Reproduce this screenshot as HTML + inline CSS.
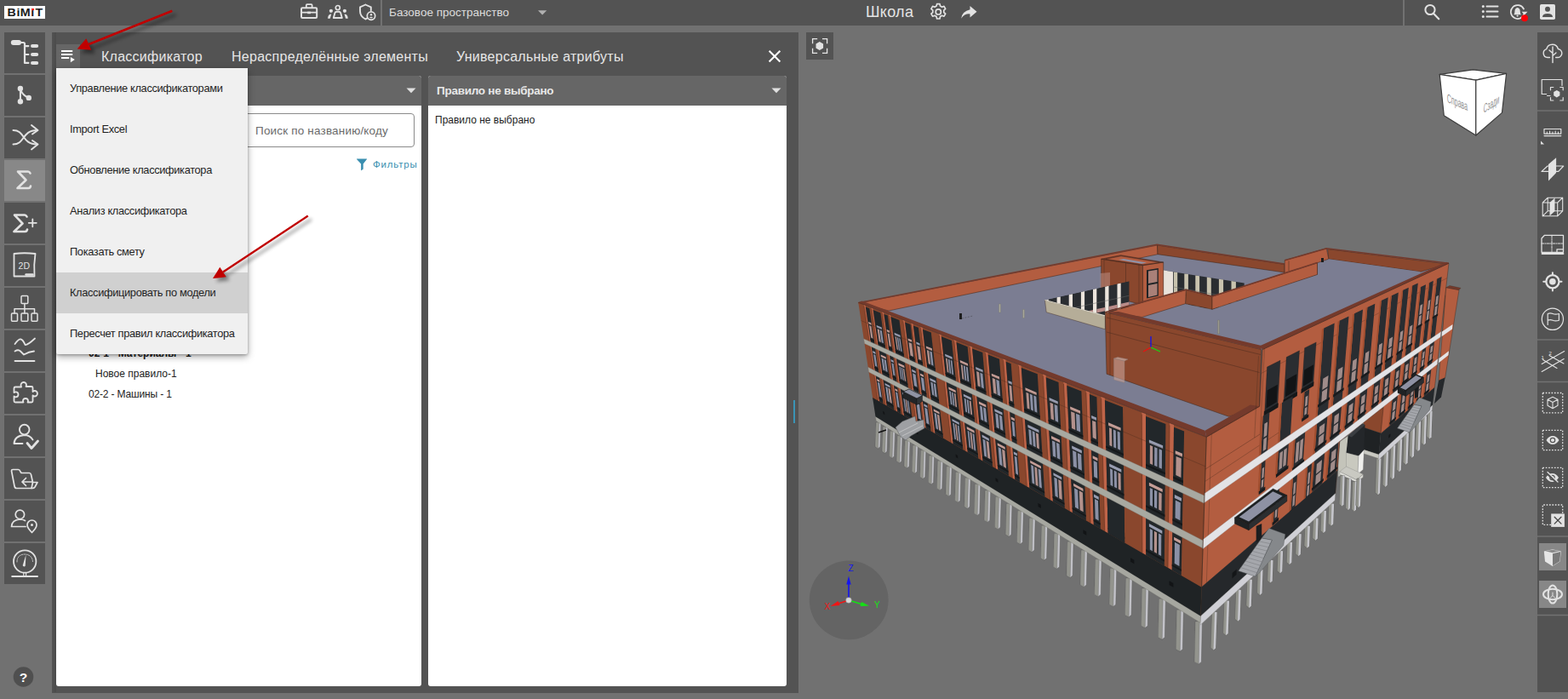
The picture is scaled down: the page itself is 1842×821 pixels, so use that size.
<!DOCTYPE html>
<html lang="ru"><head><meta charset="utf-8"><title>BIMIT</title>
<style>
*{box-sizing:border-box;margin:0;padding:0}
html,body{width:1842px;height:821px;overflow:hidden;background:#717171;font-family:"Liberation Sans",sans-serif;}
.abs{position:absolute}
#topbar{position:absolute;left:0;top:0;width:1842px;height:30px;background:#535353}
.t{position:absolute;white-space:nowrap;line-height:1}
.lb{position:absolute;left:5px;width:48px;height:48px;background:#535353}
#panel{position:absolute;left:61px;top:38px;width:877px;height:776px;background:#535353}
.sub{position:absolute;background:#fff;border-radius:3px;overflow:hidden}
.subh{position:absolute;left:0;top:0;right:0;height:35px;background:#666}
#menu{position:absolute;left:66px;top:80px;width:225px;height:336px;background:#f0f0f0;box-shadow:0 3px 8px rgba(0,0,0,.35),0 1px 3px rgba(0,0,0,.25);border-radius:0 0 2px 2px}
.mi{position:absolute;left:0;width:225px;height:48px}
.mi span{position:absolute;left:16px;top:18px;font-size:12.8px;letter-spacing:-.33px;color:#1f1f1f;white-space:nowrap;line-height:1}
#rtb{position:absolute;left:1806px;top:38px;width:36px;height:775px;background:#535353}
</style></head><body>
<!-- TOPBAR -->
<div id="topbar">
  <div class="abs" style="left:5px;top:7px;width:48px;height:15px;background:#fff"></div>
  <svg class="abs" style="left:0;top:0" width="60" height="30" viewBox="0 0 60 30"><text id="logo" transform="translate(8.600 18.800) scale(1.190 1)" dx="0 0.300 0.100 0.200 1" letter-spacing=".2" font-family="Liberation Sans,sans-serif" font-weight="bold" font-size="12" fill="#1c1c1c">BiMiT</text><rect x="37.400" y="10" width="2.500" height="2.100" fill="#f00"/></svg>
  <div class="abs" style="left:447px;top:0;width:2px;height:30px;background:#727272"></div>
  <div class="t" id="tspace" style="left:457px;top:8px;font-size:13.5px;color:#ddd;letter-spacing:.02px">Базовое пространство</div>
  <div class="t" id="tschool" style="left:1017px;top:5px;font-size:18px;color:#e4e4e4;letter-spacing:.3px">Школа</div>
  <div class="abs" style="left:1648px;top:0;width:2px;height:30px;background:#727272"></div>
  <svg class="abs" style="left:0;top:0" width="1842" height="30" viewBox="0 0 1842 30" fill="none" stroke="#e2e2e2" stroke-width="1.800" stroke-linejoin="round" stroke-linecap="round">
  <!-- briefcase -->
  <rect x="354" y="9.300" width="18.200" height="11.700" rx="1.200" stroke-width="2"/><path d="M359.800 9V6.200q0-1 1-1h4.800q1 0 1 1V9M354 14.600h18.200" stroke-width="1.800"/><rect x="361.200" y="13.600" width="3.800" height="2.600" fill="#e2e2e2" stroke="none"/>
  <!-- people -->
  <circle cx="396.800" cy="9" r="2.500" stroke-width="1.700"/><path d="M391.800 21l1.700-6q.5-1.300 2-1.300h2.600q1.500 0 2 1.300l1.700 6z" stroke-width="1.900"/>
  <g fill="#e2e2e2" stroke="none"><circle cx="388.900" cy="12.800" r="2.100"/><circle cx="404.900" cy="12.800" r="2.100"/><path d="M385 21.800q.3-5.300 4.300-5.300l-1.500 5.300zM408.800 21.800q-.3-5.300-4.300-5.300l1.500 5.300z"/></g>
  <!-- shield -->
  <path d="M429.300 5.500l-6.300 2.800v5q0 6 6.300 9.200q1.200-.5 2.200-1.200M429.300 5.500l6.500 2.800v4" stroke-width="1.900"/><circle cx="436" cy="18.600" r="4.700" stroke-width="1.700"/><circle cx="436" cy="17.200" r="1.200" fill="#e2e2e2" stroke="none"/><path d="M433.700 20.600q2.300-1.600 4.600 0q-2.300 1.600-4.600 0z" fill="#e2e2e2" stroke="none"/>
  <!-- caret -->
  <path d="M632 12.300h10.300l-5.150 5.200z" fill="#b0b0b0" stroke="none"/>
  <!-- gear -->
  <g transform="translate(1102.300 13.900)" stroke-width="1.700"><circle r="3.100"/><path d="M-1.700 -9.300h3.400l.5 2.500l2.100 1.200l2.400-.9l1.700 3l-1.900 1.700v2.400l1.900 1.700l-1.700 3l-2.400-.9l-2.100 1.200l-.5 2.500h-3.400l-.5-2.500l-2.100-1.200l-2.400.9l-1.700-3l1.900-1.700v-2.400l-1.900-1.700l1.700-3l2.400.9l2.100-1.200z"/></g>
  <!-- share -->
  <path d="M1139.500 7l8 6.700l-8 6.700v-4q-6.500-.5-10.300 5.300q1-8.500 10.300-10.500z" fill="#e2e2e2" stroke="none"/>
  <!-- search -->
  <circle cx="1680" cy="11.500" r="5.600" stroke-width="2"/><path d="M1684.200 15.900l6 6.400" stroke-width="2.200"/>
  <!-- list -->
  <g stroke-width="2"><path d="M1746.500 7.500h13M1746.500 13.500h13M1746.500 19.600h13"/></g><g fill="#e2e2e2" stroke="none"><circle cx="1742.300" cy="7.500" r="1.500"/><circle cx="1742.300" cy="13.500" r="1.500"/><circle cx="1742.300" cy="19.600" r="1.500"/></g>
  <!-- bell -->
  <path d="M1790 10.500a8 8 0 1 0 .7 5" stroke-width="1.700"/><path d="M1787.500 13.800h7l-3.500 3.600z" fill="#e2e2e2" stroke="none"/>
  <path d="M1778.200 17.200q1.200-1 1.200-3.500q0-4 3.200-4.600q3.200.6 3.200 4.600q0 2.500 1.200 3.500z" fill="#e2e2e2" stroke="none"/><circle cx="1782.600" cy="18.600" r="1.100" fill="#e2e2e2" stroke="none"/>
  <circle cx="1791" cy="21.200" r="4" fill="#fb0007" stroke="none"/>
  <!-- account -->
  <rect x="1809" y="5" width="18" height="18" rx="1.800" fill="#e2e2e2" stroke="none"/><circle cx="1818" cy="10.700" r="3" fill="#535353" stroke="none"/><path d="M1812 20q0-4 6-4t6 4z" fill="#535353" stroke="none"/>
  </svg>
</div>
<!-- LEFT TOOLBAR -->
<div id="ltb">
<svg class="abs" style="left:0;top:0" width="60" height="821" viewBox="0 0 60 821" fill="none" stroke="#e2e2e2" stroke-width="2.2" stroke-linecap="round" stroke-linejoin="round">
<g fill="#535353" stroke="none">
<rect x="5" y="38" width="48" height="48"/><rect x="5" y="88" width="48" height="48"/><rect x="5" y="138" width="48" height="48"/>
<rect x="5" y="188" width="48" height="48" fill="#888"/><rect x="5" y="238" width="48" height="48"/><rect x="5" y="288" width="48" height="48"/>
<rect x="5" y="338" width="48" height="48"/><rect x="5" y="388" width="48" height="48"/><rect x="5" y="438" width="48" height="48"/>
<rect x="5" y="488" width="48" height="48"/><rect x="5" y="538" width="48" height="48"/><rect x="5" y="588" width="48" height="48"/>
<rect x="5" y="638" width="48" height="48"/></g>
<!-- 1 tree -->
<g><rect x="12.8" y="47" width="12.2" height="6" rx="3" fill="#e2e2e2" stroke="none"/>
<path d="M24 50h3.4q1.6 0 1.6 1.6V73.9h4.4M29 54.1h4.4M29 64h4.4"/>
<rect x="36" y="52.1" width="9.2" height="4" rx="2" fill="#e2e2e2" stroke="none"/><rect x="36" y="62" width="9.2" height="4" rx="2" fill="#e2e2e2" stroke="none"/><rect x="36" y="71.9" width="9.2" height="4" rx="2" fill="#e2e2e2" stroke="none"/></g>
<!-- 2 branch -->
<g><circle cx="23.9" cy="104" r="3.2" fill="#e2e2e2" stroke="none"/><circle cx="23.9" cy="119.2" r="3.2" fill="#e2e2e2" stroke="none"/><circle cx="33.8" cy="114.9" r="3.2" fill="#e2e2e2" stroke="none"/>
<path d="M23.9 104V119.2M24.2 105q2 7 9.6 9.9" stroke-width="2"/></g>
<!-- 3 shuffle -->
<g stroke-width="2"><path d="M15.5 153c14 0 10 16.500 28 16.500M15.500 169.500c14 0 10-16.500 28-16.500"/><path d="M37 147l7.500 6-6.500 4.500M38 165l6.500 4.500-7.500 6"/></g>
<!-- 4 sigma -->
<path d="M35.500 203.500q-1-2-2.500-2H21l9.500 10L20.500 221h13q2 0 2.500-2.500" stroke-width="2.600"/>
<!-- 5 sigma plus -->
<path d="M31.500 254.500q-1-2-2.500-2H17l9.500 10L16.500 272h13q2 0 2.500-2.500" stroke-width="2.600"/><path d="M33.800 261.800h9M38.300 257.300v9" stroke-width="1.800"/>
<!-- 6 2D -->
<g stroke-width="1.800"><path d="M16.500 298q12-1.500 25 0q-2 13-1 26.500H16.500z"/><path d="M30.500 322.500h8" stroke-width="2.400"/></g>
<text x="28.300" y="315.500" font-family="Liberation Sans,sans-serif" font-size="10.500" text-anchor="middle" fill="#e2e2e2" stroke="none">2D</text>
<!-- 7 org -->
<g stroke-width="1.500"><rect x="25" y="347.500" width="7.800" height="9" rx="1"/><rect x="13.500" y="368" width="7" height="9.200" rx="1"/><rect x="25" y="368" width="7.800" height="9.200" rx="1"/><rect x="37" y="368" width="7" height="9.200" rx="1"/><path d="M28.900 356.500V368M17 368v-5.200h23.500v5.200"/></g>
<!-- 8 chart -->
<g stroke-width="1.800"><path d="M17.500 404q4.500-6 7-5.500t5 6.500q3 .5 11.500-7.500"/><path d="M17.500 412.500q4-2.500 6.500 0t4 4q6-3.500 12-4"/><path d="M17.500 424h23"/></g>
<!-- 9 puzzle -->
<path stroke-width="1.800" d="M24.500 452.500a3.200 3.200 0 1 1 6.500-.5l-.5 2h6.500q1.500 0 1.500 1.500v4.500q1-1 2.200-1a3.200 3.200 0 1 1 0 6.500q-1.200 0-2.200-1v6.500q0 1.500-1.500 1.500h-4.500l.5-1.500a3 3 0 1 0-6 0l.5 1.500H18q-1.500 0-1.500-1.500v-5.500q1 .8 2 .8a3 3 0 1 0 0-6q-1 0-2 .8V456q0-1.500 1.500-1.500h7z"/>
<!-- 10 user check -->
<g stroke-width="1.900"><circle cx="28.700" cy="504.600" r="5.800"/><path d="M16.500 521q.5-9 12-10q6.500 0 10 5.500M16.500 521h10"/><path d="M32 520.500l5 6l7.500-8.500" stroke-width="2.800"/></g>
<!-- 11 folder -->
<g stroke-width="1.700"><path d="M13.500 553q0-1.500 1.500-1.500h6.500q1.500 0 2.500 2.500l1 1.500h9.500q1.500 0 2 2l2 9h5.500l-3 5.500q-1 1.500-3 1.500H19.500q-2 0-2.500-2.500z"/><path d="M26 566h12M30.500 561.500l-4.500 4.500l4.500 4.500M38.500 566.500l-1.500 7"/></g>
<!-- 12 user pin -->
<g stroke-width="1.700"><circle cx="23.400" cy="604.300" r="5.200"/><path d="M13.500 618.500q.5-8 10-8.500q3.500 0 6 1.500M13.500 618.500H30"/><path d="M37.500 625.500q-5.500-5.500-5.500-9a5.500 5.500 0 1 1 11 0q0 3.500-5.500 9z"/><circle cx="37.500" cy="616.500" r="1.500" fill="#e2e2e2" stroke="none"/></g>
<!-- 13 gauge -->
<g stroke-width="1.800"><circle cx="29.200" cy="659.500" r="13.200"/><path d="M14.200 677h29.800" stroke-width="2"/><path d="M27.800 672.500v4h2.800v-4" stroke-width="1.200"/><path d="M30.500 651.500l-3.800 12.500a1.700 1.700 0 0 0 3 .8z" fill="#e2e2e2" stroke="none"/><path d="M20 660q0-8.500 9-9q9 .5 9.500 9" stroke-width=".8" stroke-dasharray="1.500 1.200"/></g>
<!-- help -->
<circle cx="27.500" cy="795" r="11.800" fill="#4f4f4f" stroke="none"/>
<text x="27.500" y="800.500" font-family="Liberation Sans,sans-serif" font-size="15.500" font-weight="bold" text-anchor="middle" fill="#fff" stroke="none">?</text>
</svg>
</div>
<!-- PANEL -->
<div id="panel">
  <div class="abs" style="left:0;top:0;width:5px;height:775px;background:linear-gradient(90deg,#535353,#4b4b4b)"></div>
  <div class="abs" style="left:5px;top:14px;width:28px;height:28px;background:#666"></div>
  <div class="abs" style="left:871.300px;top:432px;width:1.800px;height:27px;background:#3a94b5"></div>
  <svg class="abs" style="left:0;top:0" width="877" height="100" viewBox="61 38 877 100" fill="none">
    <path d="M72 59h13.200v2H72zM72 63h13.200v2H72zM72 67h9.200v2H72z" fill="#fff"/><path d="M82.900 67l4.900 3.100l-4.900 3.100z" fill="#fff"/>
    <path d="M903.600 59.800l12.800 12.600M916.400 59.800l-12.800 12.600" stroke="#fff" stroke-width="2.100"/>
  </svg>
  <div class="t" id="tab1" style="left:58px;top:21.2px;font-size:16px;color:#e6e6e6;letter-spacing:.26px">Классификатор</div>
  <div class="t" id="tab2" style="left:211px;top:21.2px;font-size:16px;color:#e6e6e6;letter-spacing:.26px">Нераспределённые элементы</div>
  <div class="t" id="tab3" style="left:475px;top:21.2px;font-size:16px;color:#e6e6e6;letter-spacing:.26px">Универсальные атрибуты</div>
  <div class="sub" id="sub1" style="left:5px;top:51px;width:429px;height:717px">
    <div class="subh"><svg class="abs" style="right:6px;top:14px" width="12" height="7" viewBox="0 0 12 7"><path d="M.5 .5h11l-5.500 5.700z" fill="#e0e0e0"/></svg></div>
    <div class="abs" id="search" style="left:160px;top:44px;width:261px;height:40px;border:1px solid #8a8a8a;border-radius:4px"></div>
    <div class="t" id="tsearch" style="left:234px;top:58px;font-size:13.5px;color:#6b6b6b;letter-spacing:.18px">Поиск по названию/коду</div>
    <svg class="abs" style="left:352px;top:96px" width="15" height="16" viewBox="0 0 15 16"><path d="M1.200 1.500h11.600q.6 0 .2.600l-4.300 5.400v5.600q0 .5-.4.800l-1.600 1.200q-.6.400-.6-.4V7.500L1 2.100q-.4-.6.200-.6z" fill="#3a8fb0"/></svg>
    <div class="abs" style="left:23px;top:321px;width:0;height:0;border-left:3.500px solid transparent;border-right:3.500px solid transparent;border-top:3px solid #555"></div>
    <div class="t" id="tfilter" style="left:372px;top:99px;font-size:11.5px;color:#3a8fb0;letter-spacing:.8px">Фильтры</div>
    <div class="t" id="tr1" style="left:38px;top:320px;font-size:12px;color:#222;font-weight:bold">02-1 - Материалы - 1</div>
    <div class="t" id="tr2" style="left:46px;top:344px;font-size:12px;color:#222">Новое правило-1</div>
    <div class="t" id="tr3" style="left:38px;top:368px;font-size:12px;color:#222;letter-spacing:-.16px">02-2 - Машины - 1</div>
  </div>
  <div class="sub" id="sub2" style="left:442px;top:51px;width:421px;height:717px">
    <div class="subh"><svg class="abs" style="right:6px;top:14px" width="12" height="7" viewBox="0 0 12 7"><path d="M.5 .5h11l-5.500 5.700z" fill="#e0e0e0"/></svg></div>
    <div class="t" id="th2" style="left:10px;top:10.5px;font-size:13.5px;font-weight:bold;color:#e8e8e8;letter-spacing:-.27px">Правило не выбрано</div>
    <div class="t" id="tb2" style="left:8px;top:46px;font-size:12px;color:#222">Правило не выбрано</div>
  </div>
</div>
<!-- MENU -->
<div id="menu">
  <div class="mi" style="top:0"><span id="m1">Управление классификаторами</span></div>
  <div class="mi" style="top:48px"><span id="m2">Import Excel</span></div>
  <div class="mi" style="top:96px"><span id="m3">Обновление классификатора</span></div>
  <div class="mi" style="top:144px"><span id="m4">Анализ классификатора</span></div>
  <div class="mi" style="top:192px"><span id="m5">Показать смету</span></div>
  <div class="mi" style="top:240px;background:#d0d0d0"><span id="m6">Классифицировать по модели</span></div>
  <div class="mi" style="top:288px"><span id="m7">Пересчет правил классификатора</span></div>
</div>
<!-- VIEW -->
<div id="view">
<svg class="abs" style="left:940px;top:30px" width="866" height="791" viewBox="940 30 866 791" stroke-linejoin="round">
<polygon points="1008.3,355.8 1359.2,287.2 1509,310 1558.3,291.7 1702,309.2 1481.6,410.5 1480.3,477.3 1417.3,513.4" fill="#7b7d92"/>
<polygon points="1009,356 1359.5,288 1360,298.7 1044,365" fill="#b35d40" stroke="#3a2418" stroke-width="0.5"/>
<polygon points="1359.5,288 1509,310.5 1509,320 1360,298.7" fill="#8a472d" stroke="#3a2418" stroke-width="0.5"/>
<polyline points="1008.3,355.8 1359.2,287.2 1509,310" fill="none" stroke="#743a2c" stroke-width="1.6"/>
<polygon points="1559.5,292.6 1700,310 1669,319.2 1560.8,304.2" fill="#8a472d" stroke="#3a2418" stroke-width="0.5"/>
<polygon points="1509.2,305.8 1558.3,291.7 1560.8,304.2 1547.5,308.7 1547.5,322.5 1509.2,335" fill="#b35d40" stroke="#3a2418" stroke-width="0.5"/>
<polyline points="1514,306.5 1514,318" fill="none" stroke="#3a2418" stroke-width="0.5"/>
<polyline points="1509.2,305.8 1558.3,291.7 1702,309.2" fill="none" stroke="#743a2c" stroke-width="1.6"/>
<polygon points="1366.7,317.5 1461.7,332.5 1461.7,372 1366.7,352" fill="#2a2d31"/>
<polygon points="1366.7,317.5 1371,318.2 1371,352.9 1366.7,352" fill="#c9c3ae"/>
<polygon points="1378.8,319.4 1383.2,320.1 1383.2,355.5 1378.8,354.5" fill="#c9c3ae"/>
<polygon points="1391.3,321.4 1395.9,322.1 1395.9,358.2 1391.3,357.2" fill="#c9c3ae"/>
<polygon points="1404.3,323.4 1409.1,324.2 1409.1,360.9 1404.3,359.9" fill="#c9c3ae"/>
<polygon points="1417.8,325.6 1422.8,326.4 1422.8,363.8 1417.8,362.8" fill="#c9c3ae"/>
<polygon points="1431.9,327.8 1437.1,328.6 1437.1,366.8 1431.9,365.7" fill="#c9c3ae"/>
<polygon points="1446.5,330.1 1451.9,331 1451.9,369.9 1446.5,368.8" fill="#c9c3ae"/>
<polygon points="1371,343.2 1378.8,344.7 1378.8,349.3 1371,347.7" fill="#b98b88"/>
<polygon points="1383.2,345.6 1391.3,347.2 1391.3,351.8 1383.2,350.2" fill="#b98b88"/>
<polygon points="1395.9,348.1 1404.3,349.7 1404.3,354.4 1395.9,352.7" fill="#b98b88"/>
<polygon points="1409.1,350.6 1417.8,352.3 1417.8,357.2 1409.1,355.4" fill="#b98b88"/>
<polygon points="1422.8,353.3 1431.9,355.1 1431.9,360 1422.8,358.2" fill="#b98b88"/>
<polygon points="1437.1,356.1 1446.5,358 1446.5,363 1437.1,361.1" fill="#b98b88"/>
<polygon points="1451.9,359 1461.7,360.9 1461.7,366.1 1451.9,364.1" fill="#b98b88"/>
<polyline points="1366.7,334.8 1461.7,352.2" fill="none" stroke="#6b6b68" stroke-width="0.5"/>
<polygon points="1366.7,317.5 1378,319.2 1378,354 1366.7,352" fill="#e9e2da"/>
<polygon points="1293.7,304.2 1342.5,311.7 1342.5,358 1293.7,346" fill="#8a472d" stroke="#3a2418" stroke-width="0.5"/>
<polyline points="1297,304.8 1297,347" fill="none" stroke="#3a2418" stroke-width="0.4"/>
<polyline points="1322.5,308.6 1322.5,353" fill="none" stroke="#3a2418" stroke-width="0.4"/>
<polyline points="1338,311 1338,357" fill="none" stroke="#3a2418" stroke-width="0.4"/>
<polygon points="1342.5,311.7 1366.7,308 1366.7,352 1342.5,358" fill="#b35d40" stroke="#3a2418" stroke-width="0.5"/>
<polygon points="1347,317.3 1360.8,315 1360.8,347.5 1347,350.5" fill="#1f2326"/>
<polygon points="1349,318.5 1359.5,316.8 1359.5,331 1349,333" fill="#a98078"/>
<polygon points="1349,335 1359.5,333 1359.5,346.5 1349,349" fill="#a98078"/>
<polygon points="1293.7,304.2 1316.7,299.7 1366.7,308 1342.5,311.7" fill="#743a2c" stroke="#3a2418" stroke-width="0.5"/>
<polygon points="1299,304.3 1317,300.8 1362,308.2 1343,310.8" fill="#b35d40" stroke="#3a2418" stroke-width="0.4"/>
<polygon points="1314,305 1320,304 1347,308.6 1341,309.8" fill="#8f93a8"/>
<polygon points="1292.5,321 1304,320 1304,340 1292.5,342" fill="#b98d84" fill-opacity=".55"/>
<clipPath id="cl1"><polygon points="1227.5,352.3 1326.7,330 1326.7,366 1298.3,371.2"/></clipPath><g clip-path="url(#cl1)">
<polygon points="1227.5,352.5 1326.7,330.3 1326.7,364 1227.5,386" fill="#2a2d31"/>
<polygon points="1227.5,352.5 1231.7,351.6 1231.7,385.1 1227.5,386" fill="#ece5dd"/>
<polygon points="1241.6,349.3 1245.8,348.4 1245.8,381.9 1241.6,382.9" fill="#ece5dd"/>
<polygon points="1255.7,346.2 1260,345.2 1260,378.8 1255.7,379.7" fill="#ece5dd"/>
<polygon points="1269.9,343 1274.1,342.1 1274.1,375.7 1269.9,376.6" fill="#ece5dd"/>
<polygon points="1284,339.8 1288.3,338.9 1288.3,372.5 1284,373.5" fill="#ece5dd"/>
<polygon points="1298.2,336.7 1302.5,335.7 1302.5,369.4 1298.2,370.3" fill="#ece5dd"/>
<polygon points="1312.5,333.5 1316.7,332.5 1316.7,366.2 1312.5,367.2" fill="#ece5dd"/>
<polygon points="1231.7,375.7 1241.6,373.5 1241.6,377.8 1231.7,380" fill="#b98b88"/>
<polygon points="1245.8,372.5 1255.7,370.3 1255.7,374.7 1245.8,376.9" fill="#b98b88"/>
<polygon points="1260,369.4 1269.9,367.2 1269.9,371.6 1260,373.8" fill="#b98b88"/>
<polygon points="1274.1,366.3 1284,364 1284,368.4 1274.1,370.6" fill="#b98b88"/>
<polygon points="1288.3,363.1 1298.2,360.9 1298.2,365.3 1288.3,367.5" fill="#b98b88"/>
<polygon points="1302.5,359.9 1312.5,357.7 1312.5,362.1 1302.5,364.3" fill="#b98b88"/>
<polygon points="1316.7,356.8 1326.7,354.6 1326.7,358.9 1316.7,361.2" fill="#b98b88"/>
<polyline points="1227.5,369.2 1326.7,347.2" fill="none" stroke="#6b6b68" stroke-width="0.5"/>
</g>
<polygon points="1227.5,352.5 1298.3,370.8 1298.3,386.7 1229.2,366.7" fill="#b5ad98" stroke="#3a2418" stroke-width="0.4"/>
<polyline points="1227.5,352.5 1298.3,370.8" fill="none" stroke="#d6d2c4" stroke-width="1.2"/>
<polygon points="1173.5,357 1175.5,357 1175.5,367 1173.5,367" fill="#a9a89a" stroke="#77766c" stroke-width="0.4"/>
<polygon points="1201.5,363.5 1203.5,363.5 1203.5,373.5 1201.5,373.5" fill="#a9a89a" stroke="#77766c" stroke-width="0.4"/>
<polygon points="1127,368 1130,368 1130,375 1127,375" fill="#1d1d1d"/>
<polyline points="1130,374 1143,371" fill="none" stroke="#333" stroke-width="0.4" stroke-dasharray="2 1.5"/>
<polygon points="1341.7,372.5 1392.5,356.7 1424,363.3 1547.5,322.5 1560.8,304.2 1669,319.2 1480,407.5" fill="#7b7d92"/>
<polygon points="1393.3,340.4 1424,348.3 1424,363.3 1392.5,356.7" fill="#8a472d" stroke="#3a2418" stroke-width="0.5"/>
<polygon points="1424,348.3 1547.5,308.7 1547.5,322.5 1424,363.3" fill="#b35d40" stroke="#3a2418" stroke-width="0.5"/>
<polygon points="1302,367 1393.3,340.4 1392.5,356.7 1341.7,372.5" fill="#b35d40" stroke="#3a2418" stroke-width="0.5"/>
<polyline points="1298.3,366.7 1393.3,340.2 1424,348.1 1547.5,308.5" fill="none" stroke="#743a2c" stroke-width="1.6"/>
<polygon points="1298.3,366.7 1481.6,410.5 1479.5,478 1443.6,489.3 1300,439.2" fill="#8a472d" stroke="#3a2418" stroke-width="0.5"/>
<polygon points="1298.3,366.7 1481.6,410.5 1481.8,406 1314,366" fill="#743a2c"/>
<polyline points="1304,368 1304,440.5" fill="none" stroke="#3a2418" stroke-width="0.4"/>
<polyline points="1300,390 1479.5,437.5" fill="none" stroke="#3a2418" stroke-width="0.4"/>
<polyline points="1300,373 1481,416.5" fill="none" stroke="#3a2418" stroke-width="0.4"/>
<polygon points="1308.5,421 1321,424 1321,449.5 1308.5,446" fill="#c9a49a" stroke="#8a7a76" stroke-width="0.4" fill-opacity=".6"/>
<polygon points="1308.5,421 1313,419.5 1325,422 1321,424" fill="#d8c2bb" stroke="#8a7a76" stroke-width="0.4" fill-opacity=".6"/>
<polygon points="1430.5,376 1432.5,376 1432.5,392 1430.5,392" fill="#9a998c" stroke="#6f6e64" stroke-width="0.4"/>
<polygon points="1552,303 1555,303 1555,308 1552,308" fill="#1d1d1d"/>
<polyline points="1352,408 1352,395" fill="none" stroke="#1010ee" stroke-width="1.3"/>
<polyline points="1352,408 1343,413" fill="none" stroke="#ee1010" stroke-width="1.3"/>
<polyline points="1352,408 1363,413" fill="none" stroke="#10dd10" stroke-width="1.3"/>
<polygon points="1415.6,505.8 1468.8,475.6 1480.3,477.3 1417.3,513.4" fill="#743a2c"/>
<polygon points="1008.3,355.3 1417.3,513.4 1411.5,692.8 1025.4,468.9" fill="#8a472d"/>
<polygon points="1029.1,496 1034.9,496 1033.9,524.6 1031.6,527.1 1028.1,524.6" fill="#c3c3c9" stroke="#5a5a58" stroke-width="0.5"/>
<polygon points="1029.1,496 1032.6,496 1031.6,527.1 1028.1,524.6" fill="#93948d" stroke="#5a5a58" stroke-width="0.3"/>
<polygon points="1037.2,501.1 1043,501.1 1042,530.1 1039.7,532.6 1036.2,530.1" fill="#c3c3c9" stroke="#5a5a58" stroke-width="0.5"/>
<polygon points="1037.2,501.1 1040.7,501.1 1039.7,532.6 1036.2,530.1" fill="#93948d" stroke="#5a5a58" stroke-width="0.3"/>
<polygon points="1045.6,506.3 1051.5,506.3 1050.5,535.7 1048.1,538.2 1044.6,535.7" fill="#c3c3c9" stroke="#5a5a58" stroke-width="0.5"/>
<polygon points="1045.6,506.3 1049.1,506.3 1048.1,538.2 1044.6,535.7" fill="#93948d" stroke="#5a5a58" stroke-width="0.3"/>
<polygon points="1054.2,511.7 1060.1,511.7 1059.1,541.5 1056.8,544 1053.2,541.5" fill="#c3c3c9" stroke="#5a5a58" stroke-width="0.5"/>
<polygon points="1054.2,511.7 1057.8,511.7 1056.8,544 1053.2,541.5" fill="#93948d" stroke="#5a5a58" stroke-width="0.3"/>
<polygon points="1063.1,517.2 1069.1,517.2 1068.1,547.5 1065.7,550 1062.1,547.5" fill="#c3c3c9" stroke="#5a5a58" stroke-width="0.5"/>
<polygon points="1063.1,517.2 1066.7,517.2 1065.7,550 1062.1,547.5" fill="#93948d" stroke="#5a5a58" stroke-width="0.3"/>
<polygon points="1072.3,522.9 1078.3,522.9 1077.3,553.7 1074.9,556.2 1071.3,553.7" fill="#c3c3c9" stroke="#5a5a58" stroke-width="0.5"/>
<polygon points="1072.3,522.9 1075.9,522.9 1074.9,556.2 1071.3,553.7" fill="#93948d" stroke="#5a5a58" stroke-width="0.3"/>
<polygon points="1081.7,528.8 1087.8,528.8 1086.8,560.1 1084.4,562.6 1080.7,560.1" fill="#c3c3c9" stroke="#5a5a58" stroke-width="0.5"/>
<polygon points="1081.7,528.8 1085.4,528.8 1084.4,562.6 1080.7,560.1" fill="#93948d" stroke="#5a5a58" stroke-width="0.3"/>
<polygon points="1091.5,534.9 1097.6,534.9 1096.6,566.6 1094.2,569.1 1090.5,566.6" fill="#c3c3c9" stroke="#5a5a58" stroke-width="0.5"/>
<polygon points="1091.5,534.9 1095.2,534.9 1094.2,569.1 1090.5,566.6" fill="#93948d" stroke="#5a5a58" stroke-width="0.3"/>
<polygon points="1101.5,541.2 1107.8,541.2 1106.8,573.4 1104.3,575.9 1100.5,573.4" fill="#c3c3c9" stroke="#5a5a58" stroke-width="0.5"/>
<polygon points="1101.5,541.2 1105.3,541.2 1104.3,575.9 1100.5,573.4" fill="#93948d" stroke="#5a5a58" stroke-width="0.3"/>
<polygon points="1111.9,547.7 1118.2,547.7 1117.2,580.4 1114.7,582.9 1110.9,580.4" fill="#c3c3c9" stroke="#5a5a58" stroke-width="0.5"/>
<polygon points="1111.9,547.7 1115.7,547.7 1114.7,582.9 1110.9,580.4" fill="#93948d" stroke="#5a5a58" stroke-width="0.3"/>
<polygon points="1122.7,554.4 1129,554.4 1128,587.7 1125.5,590.2 1121.7,587.7" fill="#c3c3c9" stroke="#5a5a58" stroke-width="0.5"/>
<polygon points="1122.7,554.4 1126.5,554.4 1125.5,590.2 1121.7,587.7" fill="#93948d" stroke="#5a5a58" stroke-width="0.3"/>
<polygon points="1133.8,561.3 1140.2,561.3 1139.2,595.1 1136.6,597.6 1132.8,595.1" fill="#c3c3c9" stroke="#5a5a58" stroke-width="0.5"/>
<polygon points="1133.8,561.3 1137.6,561.3 1136.6,597.6 1132.8,595.1" fill="#93948d" stroke="#5a5a58" stroke-width="0.3"/>
<polygon points="1145.3,568.5 1151.8,568.5 1150.8,602.9 1148.2,605.4 1144.3,602.9" fill="#c3c3c9" stroke="#5a5a58" stroke-width="0.5"/>
<polygon points="1145.3,568.5 1149.2,568.5 1148.2,605.4 1144.3,602.9" fill="#93948d" stroke="#5a5a58" stroke-width="0.3"/>
<polygon points="1157.2,575.9 1163.8,575.9 1162.8,610.9 1160.1,613.4 1156.2,610.9" fill="#c3c3c9" stroke="#5a5a58" stroke-width="0.5"/>
<polygon points="1157.2,575.9 1161.1,575.9 1160.1,613.4 1156.2,610.9" fill="#93948d" stroke="#5a5a58" stroke-width="0.3"/>
<polygon points="1169.5,583.6 1176.2,583.6 1175.2,619.2 1172.5,621.7 1168.5,619.2" fill="#c3c3c9" stroke="#5a5a58" stroke-width="0.5"/>
<polygon points="1169.5,583.6 1173.5,583.6 1172.5,621.7 1168.5,619.2" fill="#93948d" stroke="#5a5a58" stroke-width="0.3"/>
<polygon points="1182.3,591.5 1189,591.5 1188,627.8 1185.3,630.3 1181.3,627.8" fill="#c3c3c9" stroke="#5a5a58" stroke-width="0.5"/>
<polygon points="1182.3,591.5 1186.3,591.5 1185.3,630.3 1181.3,627.8" fill="#93948d" stroke="#5a5a58" stroke-width="0.3"/>
<polygon points="1195.5,599.8 1202.4,599.8 1201.4,636.7 1198.6,639.2 1194.5,636.7" fill="#c3c3c9" stroke="#5a5a58" stroke-width="0.5"/>
<polygon points="1195.5,599.8 1199.6,599.8 1198.6,639.2 1194.5,636.7" fill="#93948d" stroke="#5a5a58" stroke-width="0.3"/>
<polygon points="1209.3,608.4 1216.2,608.4 1215.2,646 1212.4,648.5 1208.3,646" fill="#c3c3c9" stroke="#5a5a58" stroke-width="0.5"/>
<polygon points="1209.3,608.4 1213.4,608.4 1212.4,648.5 1208.3,646" fill="#93948d" stroke="#5a5a58" stroke-width="0.3"/>
<polygon points="1223.6,617.3 1230.6,617.3 1229.6,655.6 1226.8,658.1 1222.6,655.6" fill="#c3c3c9" stroke="#5a5a58" stroke-width="0.5"/>
<polygon points="1223.6,617.3 1227.8,617.3 1226.8,658.1 1222.6,655.6" fill="#93948d" stroke="#5a5a58" stroke-width="0.3"/>
<polygon points="1238.4,626.6 1245.6,626.6 1244.6,665.7 1241.7,668.2 1237.4,665.7" fill="#c3c3c9" stroke="#5a5a58" stroke-width="0.5"/>
<polygon points="1238.4,626.6 1242.7,626.6 1241.7,668.2 1237.4,665.7" fill="#93948d" stroke="#5a5a58" stroke-width="0.3"/>
<polygon points="1253.9,636.2 1261.1,636.2 1260.1,676.1 1257.2,678.6 1252.9,676.1" fill="#c3c3c9" stroke="#5a5a58" stroke-width="0.5"/>
<polygon points="1253.9,636.2 1258.2,636.2 1257.2,678.6 1252.9,676.1" fill="#93948d" stroke="#5a5a58" stroke-width="0.3"/>
<polygon points="1270,646.2 1277.3,646.2 1276.3,686.9 1273.4,689.4 1269,686.9" fill="#c3c3c9" stroke="#5a5a58" stroke-width="0.5"/>
<polygon points="1270,646.2 1274.4,646.2 1273.4,689.4 1269,686.9" fill="#93948d" stroke="#5a5a58" stroke-width="0.3"/>
<polygon points="1286.7,656.7 1294.2,656.7 1293.2,698.2 1290.2,700.7 1285.7,698.2" fill="#c3c3c9" stroke="#5a5a58" stroke-width="0.5"/>
<polygon points="1286.7,656.7 1291.2,656.7 1290.2,700.7 1285.7,698.2" fill="#93948d" stroke="#5a5a58" stroke-width="0.3"/>
<polygon points="1304.2,667.6 1311.8,667.6 1310.8,710 1307.8,712.5 1303.2,710" fill="#c3c3c9" stroke="#5a5a58" stroke-width="0.5"/>
<polygon points="1304.2,667.6 1308.8,667.6 1307.8,712.5 1303.2,710" fill="#93948d" stroke="#5a5a58" stroke-width="0.3"/>
<polygon points="1322.5,679 1330.1,679 1329.1,722.3 1326.1,724.8 1321.5,722.3" fill="#c3c3c9" stroke="#5a5a58" stroke-width="0.5"/>
<polygon points="1322.5,679 1327.1,679 1326.1,724.8 1321.5,722.3" fill="#93948d" stroke="#5a5a58" stroke-width="0.3"/>
<polygon points="1341.5,690.9 1349.3,690.9 1348.3,735.1 1345.2,737.6 1340.5,735.1" fill="#c3c3c9" stroke="#5a5a58" stroke-width="0.5"/>
<polygon points="1341.5,690.9 1346.2,690.9 1345.2,737.6 1340.5,735.1" fill="#93948d" stroke="#5a5a58" stroke-width="0.3"/>
<polygon points="1361.5,703.3 1369.4,703.3 1368.4,748.6 1365.2,751.1 1360.5,748.6" fill="#c3c3c9" stroke="#5a5a58" stroke-width="0.5"/>
<polygon points="1361.5,703.3 1366.2,703.3 1365.2,751.1 1360.5,748.6" fill="#93948d" stroke="#5a5a58" stroke-width="0.3"/>
<polygon points="1382.4,716.3 1390.4,716.3 1389.4,762.6 1386.2,765.1 1381.4,762.6" fill="#c3c3c9" stroke="#5a5a58" stroke-width="0.5"/>
<polygon points="1382.4,716.3 1387.2,716.3 1386.2,765.1 1381.4,762.6" fill="#93948d" stroke="#5a5a58" stroke-width="0.3"/>
<polygon points="1404.2,729.9 1412.4,729.9 1411.4,777.4 1408.2,779.9 1403.2,777.4" fill="#c3c3c9" stroke="#5a5a58" stroke-width="0.5"/>
<polygon points="1404.2,729.9 1409.2,729.9 1408.2,779.9 1403.2,777.4" fill="#93948d" stroke="#5a5a58" stroke-width="0.3"/>
<polygon points="1028.5,489.3 1410.5,723.6 1410.2,731.5 1029.3,494.6" fill="#a6a7a0" stroke="#77776f" stroke-width="0.4"/>
<polygon points="1014.7,357.8 1016.6,358.5 1033.2,471.5 1031.4,470.5" fill="#bf6448"/>
<polygon points="1016.9,360.5 1021.4,362.3 1037.6,474.1 1033.2,471.5" fill="#22272a"/>
<polygon points="1020.1,378 1023.3,379.3 1023.7,381.9 1020.5,380.6" fill="#c59e97"/>
<polygon points="1021.1,382.1 1023.5,383.2 1025.6,397.7 1023.2,396.6" fill="#b3918c"/>
<polygon points="1022.4,397.8 1026.8,399.8 1027.1,401.5 1022.6,399.5" fill="#15181a"/>
<polygon points="1025.1,411.9 1028.3,413.4 1028.6,415.9 1025.5,414.4" fill="#989db1"/>
<polygon points="1026.1,415.9 1028.4,417.1 1030.5,430.9 1028.1,429.7" fill="#8b90a5"/>
<polygon points="1027.2,430.8 1031.7,433 1031.9,434.7 1027.4,432.4" fill="#15181a"/>
<polygon points="1030,444.9 1033.1,446.5 1033.4,449 1030.3,447.3" fill="#c59e97"/>
<polygon points="1030.9,448.8 1033.3,450.1 1035.7,467.1 1033.4,465.8" fill="#8b90a5"/>
<polygon points="1032.5,466.7 1036.9,469.2 1037.2,470.8 1032.7,468.3" fill="#15181a"/>
<polyline points="1015,359.5 1031.4,470.5" fill="none" stroke="#5e2f1f" stroke-width="0.6"/>
<polygon points="1023.5,361.2 1025.4,361.9 1041.8,476.5 1040,475.5" fill="#bf6448"/>
<polygon points="1025.7,364 1034.4,367.4 1050.4,481.4 1041.8,476.5" fill="#22272a"/>
<polygon points="1029.6,382 1035.7,384.5 1036.1,387.2 1030,384.6" fill="#989db1"/>
<polygon points="1030.6,386.2 1032.8,387.1 1034.9,401.9 1032.7,400.9" fill="#b3918c"/>
<polygon points="1033.6,387.5 1035.9,388.4 1038,403.3 1035.7,402.3" fill="#8b90a5"/>
<polygon points="1031.1,401.8 1039.8,405.7 1040,407.4 1031.4,403.5" fill="#15181a"/>
<polygon points="1034.6,416.4 1040.6,419.3 1041,421.8 1034.9,418.9" fill="#c59e97"/>
<polygon points="1035.5,420.5 1037.7,421.6 1039.7,435.6 1037.5,434.5" fill="#8b90a5"/>
<polygon points="1038.5,421.9 1040.8,423 1042.7,437.1 1040.5,436" fill="#8b90a5"/>
<polygon points="1035.9,435.2 1044.5,439.6 1044.7,441.3 1036.2,436.9" fill="#15181a"/>
<polygon points="1039.4,449.9 1045.4,453.1 1045.7,455.5 1039.7,452.3" fill="#989db1"/>
<polygon points="1040.3,453.9 1042.5,455.1 1044.9,472.3 1042.7,471.1" fill="#8b90a5"/>
<polygon points="1043.3,455.5 1045.5,456.7 1047.9,474 1045.7,472.8" fill="#b3918c"/>
<polygon points="1041.1,471.6 1049.7,476.5 1049.9,478.1 1041.4,473.2" fill="#15181a"/>
<polyline points="1023.7,362.9 1040,475.5" fill="none" stroke="#5e2f1f" stroke-width="0.6"/>
<polygon points="1036.1,366.1 1038.1,366.8 1054.3,483.7 1052.3,482.6" fill="#bf6448"/>
<polygon points="1038.4,368.9 1042.8,370.6 1058.6,486.2 1054.3,483.7" fill="#22272a"/>
<polygon points="1041.6,387 1044.7,388.3 1045.1,391 1042,389.7" fill="#c59e97"/>
<polygon points="1042.6,391.3 1044.8,392.3 1046.9,407.3 1044.7,406.3" fill="#b3918c"/>
<polygon points="1043.7,407.5 1048.1,409.5 1048.4,411.2 1044,409.2" fill="#15181a"/>
<polygon points="1046.4,422.1 1049.5,423.5 1049.9,426.1 1046.8,424.6" fill="#989db1"/>
<polygon points="1047.4,426.2 1049.6,427.3 1051.6,441.6 1049.4,440.5" fill="#8b90a5"/>
<polygon points="1048.5,441.6 1052.8,443.8 1053,445.5 1048.7,443.3" fill="#15181a"/>
<polygon points="1051.2,456.2 1054.2,457.8 1054.5,460.3 1051.5,458.6" fill="#c59e97"/>
<polygon points="1052.1,460.2 1054.3,461.4 1056.7,479 1054.5,477.7" fill="#8b90a5"/>
<polygon points="1053.6,478.7 1057.9,481.2 1058.1,482.8 1053.8,480.3" fill="#15181a"/>
<polyline points="1036.4,367.8 1052.3,482.6" fill="none" stroke="#5e2f1f" stroke-width="0.6"/>
<polygon points="1044.1,369.1 1046.1,369.9 1062.1,488.2 1060.1,487.1" fill="#bf6448"/>
<polygon points="1046.4,372 1056.5,376 1071.9,493.8 1062.1,488.2" fill="#22272a"/>
<polygon points="1050.5,390.8 1057.5,393.7 1057.9,396.4 1050.9,393.4" fill="#989db1"/>
<polygon points="1051.5,395.1 1053,395.7 1055,411 1053.6,410.3" fill="#b3918c"/>
<polygon points="1053.8,396.1 1055.3,396.7 1057.3,412 1055.9,411.4" fill="#8b90a5"/>
<polygon points="1056.2,397.1 1057.6,397.7 1059.7,413.1 1058.2,412.4" fill="#8b90a5"/>
<polygon points="1051.7,411.1 1061.6,415.6 1061.9,417.4 1051.9,412.9" fill="#15181a"/>
<polygon points="1055.3,426.3 1062.2,429.6 1062.6,432.2 1055.6,428.9" fill="#c59e97"/>
<polygon points="1056.3,430.5 1057.7,431.2 1059.6,445.7 1058.2,445" fill="#8b90a5"/>
<polygon points="1058.6,431.6 1060,432.3 1061.9,446.9 1060.5,446.1" fill="#8b90a5"/>
<polygon points="1060.9,432.8 1062.3,433.5 1064.3,448 1062.8,447.3" fill="#b3918c"/>
<polygon points="1056.4,445.6 1066.2,450.6 1066.4,452.4 1056.6,447.3" fill="#15181a"/>
<polygon points="1059.9,460.8 1066.8,464.5 1067.2,467 1060.3,463.3" fill="#989db1"/>
<polygon points="1060.9,465 1062.3,465.7 1064.7,483.5 1063.3,482.7" fill="#8b90a5"/>
<polygon points="1063.2,466.2 1064.6,467 1067,484.8 1065.5,484" fill="#b3918c"/>
<polygon points="1065.5,467.4 1066.9,468.2 1069.3,486.1 1067.8,485.3" fill="#8b90a5"/>
<polygon points="1061.4,483.2 1071.2,488.7 1071.4,490.4 1061.6,484.8" fill="#15181a"/>
<polyline points="1044.4,371 1060.1,487.1" fill="none" stroke="#5e2f1f" stroke-width="0.6"/>
<polygon points="1060.6,375.5 1062.8,376.4 1078.3,497.5 1076.2,496.3" fill="#bf6448"/>
<polygon points="1063.1,378.5 1069.5,381 1084.5,501.1 1078.3,497.5" fill="#22272a"/>
<polygon points="1066.5,397.5 1071,399.3 1071.3,402.1 1066.9,400.2" fill="#c59e97"/>
<polygon points="1067.5,401.9 1071.1,403.4 1073,419.1 1069.5,417.5" fill="#b3918c"/>
<polygon points="1068.2,418.6 1074.5,421.5 1074.8,423.3 1068.4,420.4" fill="#15181a"/>
<polygon points="1071.1,433.8 1075.6,436 1075.9,438.6 1071.5,436.5" fill="#989db1"/>
<polygon points="1072.1,438.2 1075.6,439.9 1077.5,454.8 1074,453" fill="#8b90a5"/>
<polygon points="1072.7,454 1079,457.2 1079.2,458.9 1072.9,455.7" fill="#15181a"/>
<polygon points="1075.6,469.2 1080,471.5 1080.4,474.1 1076,471.8" fill="#c59e97"/>
<polygon points="1076.6,473.4 1080.1,475.3 1082.4,493.5 1078.9,491.5" fill="#8b90a5"/>
<polygon points="1077.6,492.4 1083.9,495.9 1084.1,497.6 1077.8,494" fill="#15181a"/>
<polyline points="1060.9,377.4 1076.2,496.3" fill="none" stroke="#5e2f1f" stroke-width="0.6"/>
<polygon points="1070.4,379.3 1072.6,380.2 1087.8,503 1085.7,501.8" fill="#bf6448"/>
<polygon points="1072.9,382.4 1078.9,384.7 1093.6,506.4 1087.8,503" fill="#22272a"/>
<polygon points="1076.2,401.5 1080.4,403.3 1080.8,406.1 1076.6,404.3" fill="#989db1"/>
<polygon points="1077.2,406.1 1080.5,407.4 1082.4,423.3 1079.2,421.9" fill="#b3918c"/>
<polygon points="1077.9,423 1083.9,425.7 1084.1,427.6 1078.1,424.8" fill="#15181a"/>
<polygon points="1080.8,438.4 1084.9,440.4 1085.2,443.1 1081.1,441.1" fill="#c59e97"/>
<polygon points="1081.7,442.8 1085,444.4 1086.8,459.5 1083.6,457.8" fill="#8b90a5"/>
<polygon points="1082.4,458.9 1088.3,461.9 1088.5,463.6 1082.6,460.6" fill="#15181a"/>
<polygon points="1085.2,474.3 1089.3,476.5 1089.6,479.1 1085.5,476.9" fill="#989db1"/>
<polygon points="1086.1,478.6 1089.3,480.3 1091.6,498.7 1088.4,496.9" fill="#8b90a5"/>
<polygon points="1087.2,497.8 1093,501.1 1093.2,502.8 1087.4,499.5" fill="#15181a"/>
<polyline points="1070.6,381.2 1085.7,501.8" fill="none" stroke="#5e2f1f" stroke-width="0.6"/>
<polygon points="1081.3,383.5 1083.7,384.4 1098.5,509.2 1096.3,507.9" fill="#bf6448"/>
<polygon points="1083.9,386.7 1093.8,390.5 1108.1,514.7 1098.5,509.2" fill="#22272a"/>
<polygon points="1087.8,406.4 1094.8,409.3 1095.1,412.2 1088.2,409.2" fill="#c59e97"/>
<polygon points="1088.8,411 1091.3,412.1 1093.2,428.2 1090.7,427.1" fill="#b3918c"/>
<polygon points="1092.3,412.5 1094.8,413.5 1096.6,429.8 1094.2,428.6" fill="#8b90a5"/>
<polygon points="1088.8,428 1098.6,432.4 1098.9,434.3 1089.1,429.8" fill="#15181a"/>
<polygon points="1092.3,443.9 1099.1,447.2 1099.4,450 1092.6,446.7" fill="#989db1"/>
<polygon points="1093.3,448.4 1095.7,449.6 1097.5,464.9 1095.1,463.6" fill="#8b90a5"/>
<polygon points="1096.7,450.1 1099.1,451.2 1100.9,466.6 1098.4,465.4" fill="#8b90a5"/>
<polygon points="1093.2,464.4 1102.9,469.3 1103.1,471.1 1093.4,466.2" fill="#15181a"/>
<polygon points="1096.6,480.3 1103.4,483.9 1103.7,486.6 1096.9,483" fill="#c59e97"/>
<polygon points="1097.5,484.7 1100,486 1102.1,504.7 1099.7,503.3" fill="#8b90a5"/>
<polygon points="1100.9,486.5 1103.4,487.8 1105.5,506.6 1103.1,505.2" fill="#b3918c"/>
<polygon points="1097.9,503.9 1107.5,509.3 1107.7,511.1 1098.1,505.6" fill="#15181a"/>
<polyline points="1081.6,385.4 1096.3,507.9" fill="none" stroke="#5e2f1f" stroke-width="0.6"/>
<polygon points="1103.1,392 1105.6,392.9 1119.7,521.4 1117.3,520" fill="#bf6448"/>
<polygon points="1105.9,395.2 1118,400 1131.4,528.1 1119.7,521.4" fill="#22272a"/>
<polygon points="1110,415.7 1118.5,419.3 1118.8,422.2 1110.4,418.6" fill="#989db1"/>
<polygon points="1111,420.5 1112.8,421.2 1114.6,437.8 1112.8,437.1" fill="#b3918c"/>
<polygon points="1113.8,421.7 1115.6,422.4 1117.4,439.1 1115.6,438.3" fill="#8b90a5"/>
<polygon points="1116.7,422.9 1118.4,423.6 1120.2,440.4 1118.4,439.6" fill="#8b90a5"/>
<polygon points="1110.5,437.8 1122.5,443.3 1122.7,445.2 1110.7,439.7" fill="#15181a"/>
<polygon points="1114.2,454.4 1122.6,458.4 1122.9,461.2 1114.5,457.2" fill="#c59e97"/>
<polygon points="1115.2,459 1117,459.9 1118.7,475.6 1116.9,474.7" fill="#8b90a5"/>
<polygon points="1118,460.4 1119.7,461.2 1121.4,477 1119.7,476.1" fill="#8b90a5"/>
<polygon points="1120.8,461.7 1122.5,462.6 1124.2,478.4 1122.4,477.5" fill="#b3918c"/>
<polygon points="1114.6,475.3 1126.5,481.3 1126.7,483.2 1114.8,477.1" fill="#15181a"/>
<polygon points="1118.3,491.9 1126.6,496.3 1126.9,499 1118.6,494.6" fill="#989db1"/>
<polygon points="1119.3,496.4 1121,497.3 1123.1,516.5 1121.4,515.6" fill="#8b90a5"/>
<polygon points="1122,497.9 1123.7,498.8 1125.8,518.1 1124.1,517.1" fill="#b3918c"/>
<polygon points="1124.8,499.4 1126.5,500.3 1128.5,519.6 1126.8,518.7" fill="#8b90a5"/>
<polygon points="1119.1,516 1130.8,522.6 1131,524.4 1119.3,517.7" fill="#15181a"/>
<polyline points="1103.3,393.9 1117.3,520" fill="none" stroke="#5e2f1f" stroke-width="0.6"/>
<polygon points="1120.6,398.7 1123.3,399.7 1136.7,531.2 1134.1,529.7" fill="#bf6448"/>
<polygon points="1123.5,402.1 1136.6,407.2 1149.3,538.5 1136.7,531.2" fill="#22272a"/>
<polygon points="1127.7,423.1 1136.9,427 1137.2,430 1128,426.1" fill="#c59e97"/>
<polygon points="1128.8,428 1130.7,428.9 1132.4,445.9 1130.5,445" fill="#b3918c"/>
<polygon points="1131.8,429.3 1133.7,430.1 1135.4,447.2 1133.5,446.4" fill="#8b90a5"/>
<polygon points="1134.8,430.6 1136.8,431.5 1138.4,448.6 1136.5,447.7" fill="#8b90a5"/>
<polygon points="1128,445.7 1140.9,451.6 1141.1,453.6 1128.2,447.7" fill="#15181a"/>
<polygon points="1131.7,462.7 1140.8,467.1 1141,470 1132,465.6" fill="#989db1"/>
<polygon points="1132.7,467.5 1134.6,468.4 1136.2,484.5 1134.3,483.6" fill="#8b90a5"/>
<polygon points="1135.7,468.9 1137.6,469.9 1139.2,486 1137.3,485.1" fill="#8b90a5"/>
<polygon points="1138.7,470.4 1140.6,471.3 1142.2,487.5 1140.3,486.6" fill="#b3918c"/>
<polygon points="1131.9,484.1 1144.7,490.6 1144.8,492.5 1132.1,486" fill="#15181a"/>
<polygon points="1135.6,501.1 1144.5,505.8 1144.8,508.7 1135.9,503.9" fill="#c59e97"/>
<polygon points="1136.6,505.7 1138.4,506.7 1140.4,526.4 1138.6,525.3" fill="#8b90a5"/>
<polygon points="1139.5,507.3 1141.4,508.3 1143.4,528 1141.5,527" fill="#b3918c"/>
<polygon points="1142.5,508.9 1144.4,509.9 1146.3,529.7 1144.4,528.6" fill="#8b90a5"/>
<polygon points="1136.1,525.6 1148.7,532.8 1148.9,534.6 1136.3,527.4" fill="#15181a"/>
<polyline points="1120.8,400.8 1134.1,529.7" fill="none" stroke="#5e2f1f" stroke-width="0.6"/>
<polygon points="1139.1,405.9 1141.9,406.9 1154.5,541.5 1151.9,540" fill="#bf6448"/>
<polygon points="1142.1,409.4 1154.3,414.1 1166.1,548.2 1154.5,541.5" fill="#22272a"/>
<polygon points="1146.1,430.9 1154.5,434.4 1154.8,437.5 1146.4,433.9" fill="#989db1"/>
<polygon points="1147.1,435.9 1150.1,437.2 1151.7,454.6 1148.7,453.2" fill="#b3918c"/>
<polygon points="1151.3,437.7 1154.4,439 1155.9,456.5 1152.9,455.1" fill="#8b90a5"/>
<polygon points="1146.3,454.1 1158.3,459.5 1158.5,461.5 1146.5,456.1" fill="#15181a"/>
<polygon points="1149.9,471.4 1158.2,475.4 1158.5,478.4 1150.1,474.4" fill="#c59e97"/>
<polygon points="1150.9,476.3 1153.8,477.7 1155.4,494.2 1152.4,492.7" fill="#8b90a5"/>
<polygon points="1155,478.3 1158,479.7 1159.5,496.3 1156.5,494.8" fill="#8b90a5"/>
<polygon points="1150,493.3 1161.8,499.3 1162,501.3 1150.2,495.3" fill="#15181a"/>
<polygon points="1153.5,510.6 1161.7,515 1162,517.9 1153.8,513.5" fill="#989db1"/>
<polygon points="1154.5,515.4 1157.4,516.9 1159.3,537 1156.3,535.4" fill="#8b90a5"/>
<polygon points="1158.6,517.6 1161.5,519.2 1163.4,539.3 1160.4,537.7" fill="#b3918c"/>
<polygon points="1154,535.8 1165.6,542.4 1165.8,544.3 1154.2,537.7" fill="#15181a"/>
<polyline points="1139.3,408 1151.9,540" fill="none" stroke="#5e2f1f" stroke-width="0.6"/>
<polygon points="1157.5,413 1160.5,414.1 1172.3,551.7 1169.5,550.1" fill="#bf6448"/>
<polygon points="1160.7,416.6 1174,421.8 1185,559 1172.3,551.7" fill="#22272a"/>
<polygon points="1164.7,438.7 1174,442.5 1174.2,445.7 1165,441.8" fill="#c59e97"/>
<polygon points="1165.7,443.8 1169.1,445.2 1170.6,463.1 1167.2,461.6" fill="#b3918c"/>
<polygon points="1170.3,445.8 1173.7,447.2 1175.2,465.2 1171.8,463.7" fill="#8b90a5"/>
<polygon points="1164.6,462.4 1177.7,468.3 1177.9,470.4 1164.8,464.4" fill="#15181a"/>
<polygon points="1168.2,480.2 1177.4,484.5 1177.6,487.6 1168.5,483.2" fill="#989db1"/>
<polygon points="1169.2,485.1 1172.5,486.8 1173.9,503.6 1170.6,501.9" fill="#8b90a5"/>
<polygon points="1173.8,487.3 1177.1,489 1178.5,505.9 1175.2,504.2" fill="#8b90a5"/>
<polygon points="1168,502.5 1181,509.1 1181.1,511.1 1168.2,504.5" fill="#15181a"/>
<polygon points="1171.6,520.3 1180.6,525.1 1180.9,528 1171.9,523.2" fill="#c59e97"/>
<polygon points="1172.6,525.1 1175.9,526.9 1177.6,547.4 1174.3,545.6" fill="#8b90a5"/>
<polygon points="1177.1,527.5 1180.4,529.3 1182.1,549.9 1178.8,548.1" fill="#b3918c"/>
<polygon points="1171.8,545.9 1184.5,553.1 1184.6,555.1 1171.9,547.8" fill="#15181a"/>
<polyline points="1157.7,415.1 1169.5,550.1" fill="none" stroke="#5e2f1f" stroke-width="0.6"/>
<polygon points="1178.4,421.1 1181.5,422.3 1192.3,563.3 1189.3,561.6" fill="#bf6448"/>
<polygon points="1181.7,424.8 1187.7,427.2 1198,566.6 1192.3,563.3" fill="#22272a"/>
<polygon points="1184.4,446.9 1188.6,448.7 1188.8,451.9 1184.6,450.1" fill="#989db1"/>
<polygon points="1185.4,452.2 1188.3,453.4 1189.6,471.7 1186.8,470.4" fill="#b3918c"/>
<polygon points="1185.3,471.8 1191.2,474.5 1191.4,476.6 1185.5,473.9" fill="#15181a"/>
<polygon points="1187.6,489.4 1191.7,491.4 1192,494.5 1187.8,492.5" fill="#c59e97"/>
<polygon points="1188.6,494.5 1191.4,495.9 1192.7,513.1 1189.9,511.7" fill="#8b90a5"/>
<polygon points="1188.5,512.9 1194.3,515.9 1194.4,517.9 1188.6,514.9" fill="#15181a"/>
<polygon points="1190.7,530.4 1194.8,532.6 1195,535.6 1191,533.4" fill="#989db1"/>
<polygon points="1191.7,535.4 1194.5,536.9 1196.1,557.9 1193.3,556.3" fill="#8b90a5"/>
<polygon points="1191.8,557.3 1197.6,560.6 1197.7,562.5 1192,559.3" fill="#15181a"/>
<polyline points="1178.6,423.2 1189.3,561.6" fill="none" stroke="#5e2f1f" stroke-width="0.6"/>
<polygon points="1196.3,428 1199.6,429.2 1209.4,573.1 1206.3,571.4" fill="#bf6448"/>
<polygon points="1199.8,431.9 1218.8,439.3 1227.4,583.5 1209.4,573.1" fill="#22272a"/>
<polygon points="1204.4,455.3 1217.6,460.9 1217.8,464.2 1204.6,458.6" fill="#c59e97"/>
<polygon points="1205.4,460.7 1208.4,462 1209.6,480.7 1206.7,479.4" fill="#b3918c"/>
<polygon points="1209.8,462.6 1212.8,463.9 1214,482.7 1211,481.3" fill="#8b90a5"/>
<polygon points="1214.2,464.5 1217.3,465.8 1218.4,484.7 1215.4,483.3" fill="#8b90a5"/>
<polygon points="1203,479.8 1221.7,488.3 1221.9,490.5 1203.2,482" fill="#15181a"/>
<polygon points="1207.3,498.8 1220.3,505 1220.5,508.2 1207.5,502" fill="#989db1"/>
<polygon points="1208.3,504.1 1211.3,505.5 1212.4,523.1 1209.5,521.6" fill="#8b90a5"/>
<polygon points="1212.6,506.1 1215.6,507.6 1216.7,525.3 1213.8,523.8" fill="#8b90a5"/>
<polygon points="1216.9,508.2 1219.9,509.7 1221,527.5 1218.1,526" fill="#b3918c"/>
<polygon points="1205.9,521.8 1224.3,531.2 1224.4,533.3 1206.1,523.9" fill="#15181a"/>
<polygon points="1210.1,540.8 1222.9,547.6 1223.1,550.6 1210.3,543.8" fill="#c59e97"/>
<polygon points="1211.1,545.8 1214,547.4 1215.4,568.8 1212.5,567.2" fill="#8b90a5"/>
<polygon points="1215.3,548.1 1218.2,549.7 1219.6,571.2 1216.7,569.6" fill="#b3918c"/>
<polygon points="1219.6,550.4 1222.5,552 1223.9,573.6 1220.9,571.9" fill="#8b90a5"/>
<polygon points="1209,567.1 1227.1,577.4 1227.2,579.4 1209.1,569.1" fill="#15181a"/>
<polyline points="1196.5,430.2 1206.3,571.4" fill="none" stroke="#5e2f1f" stroke-width="0.6"/>
<polygon points="1225.1,439.1 1228.7,440.5 1236.9,589 1233.6,587.1" fill="#bf6448"/>
<polygon points="1228.8,443.2 1243.5,448.9 1250.8,597 1236.9,589" fill="#22272a"/>
<polygon points="1232.5,467.1 1242.7,471.4 1242.9,474.8 1232.7,470.5" fill="#989db1"/>
<polygon points="1233.5,472.7 1237.1,474.3 1238.1,493.6 1234.6,492" fill="#b3918c"/>
<polygon points="1238.6,474.9 1242.3,476.4 1243.2,495.9 1239.6,494.2" fill="#8b90a5"/>
<polygon points="1231.6,492.8 1246,499.3 1246.1,501.6 1231.7,495" fill="#15181a"/>
<polygon points="1235,512 1245,516.8 1245.2,520.1 1235.1,515.3" fill="#c59e97"/>
<polygon points="1236,517.4 1239.5,519.1 1240.4,537.3 1236.9,535.5" fill="#8b90a5"/>
<polygon points="1240.9,519.8 1244.5,521.6 1245.4,539.8 1241.9,538" fill="#8b90a5"/>
<polygon points="1234,536.1 1248.1,543.3 1248.2,545.5 1234.1,538.2" fill="#15181a"/>
<polygon points="1237.3,555.2 1247.2,560.5 1247.3,563.6 1237.5,558.3" fill="#989db1"/>
<polygon points="1238.3,560.5 1241.7,562.3 1242.9,584.4 1239.5,582.4" fill="#8b90a5"/>
<polygon points="1243.2,563.1 1246.7,565 1247.8,587.1 1244.3,585.2" fill="#b3918c"/>
<polygon points="1236.5,582.7 1250.4,590.7 1250.5,592.7 1236.7,584.8" fill="#15181a"/>
<polyline points="1225.3,441.4 1233.6,587.1" fill="none" stroke="#5e2f1f" stroke-width="0.6"/>
<polygon points="1249.4,448.5 1253.1,449.9 1259.9,602.2 1256.3,600.2" fill="#bf6448"/>
<polygon points="1253.3,452.7 1270.4,459.4 1275.9,611.5 1259.9,602.2" fill="#22272a"/>
<polygon points="1257.1,477.4 1269,482.4 1269.1,486 1257.3,480.9" fill="#c59e97"/>
<polygon points="1258.1,483.2 1262.5,485 1263.3,504.9 1259,503" fill="#b3918c"/>
<polygon points="1264,485.7 1268.4,487.6 1269.2,507.6 1264.8,505.6" fill="#8b90a5"/>
<polygon points="1255.5,503.6 1272.3,511.3 1272.4,513.6 1255.6,505.9" fill="#15181a"/>
<polygon points="1259.1,523.5 1270.8,529.1 1270.9,532.5 1259.3,526.9" fill="#989db1"/>
<polygon points="1260.1,529.1 1264.3,531.1 1265.1,549.8 1260.9,547.7" fill="#8b90a5"/>
<polygon points="1265.9,531.9 1270.2,534 1270.9,552.7 1266.6,550.6" fill="#8b90a5"/>
<polygon points="1257.5,548.1 1273.9,556.4 1274,558.6 1257.6,550.2" fill="#15181a"/>
<polygon points="1261,567.8 1272.4,573.9 1272.6,577.2 1261.2,571" fill="#c59e97"/>
<polygon points="1262,573.2 1266.1,575.5 1267.1,598 1263,595.7" fill="#8b90a5"/>
<polygon points="1267.7,576.3 1271.9,578.5 1272.7,601.3 1268.6,598.9" fill="#b3918c"/>
<polygon points="1259.6,595.9 1275.7,605 1275.8,607.1 1259.7,597.9" fill="#15181a"/>
<polyline points="1249.5,450.9 1256.3,600.2" fill="none" stroke="#5e2f1f" stroke-width="0.6"/>
<polygon points="1275.8,458.7 1279.8,460.3 1284.8,616.6 1281.1,614.5" fill="#bf6448"/>
<polygon points="1279.9,463.1 1288.4,466.4 1292.8,621.2 1284.8,616.6" fill="#22272a"/>
<polygon points="1282.1,487.9 1288,490.4 1288.1,494 1282.2,491.5" fill="#989db1"/>
<polygon points="1283.1,493.9 1287.3,495.6 1287.9,516 1283.7,514.1" fill="#b3918c"/>
<polygon points="1281.6,515.5 1289.9,519.3 1290,521.6 1281.7,517.8" fill="#15181a"/>
<polygon points="1283.6,535.2 1289.4,538 1289.5,541.4 1283.7,538.6" fill="#c59e97"/>
<polygon points="1284.6,540.9 1288.7,542.9 1289.3,562 1285.2,560" fill="#8b90a5"/>
<polygon points="1283.1,561.1 1291.2,565.2 1291.3,567.5 1283.1,563.3" fill="#15181a"/>
<polygon points="1285,580.6 1290.7,583.6 1290.8,586.9 1285.1,583.9" fill="#989db1"/>
<polygon points="1286,586.1 1290,588.3 1290.7,611.4 1286.7,609.2" fill="#8b90a5"/>
<polygon points="1284.6,610.1 1292.6,614.6 1292.7,616.8 1284.7,612.2" fill="#15181a"/>
<polyline points="1275.9,461.1 1281.1,614.5" fill="none" stroke="#5e2f1f" stroke-width="0.6"/>
<polygon points="1293.6,465.6 1297.9,467.2 1301.7,626.3 1297.7,624.1" fill="#bf6448"/>
<polygon points="1297.9,470.1 1319,478.3 1321.2,637.6 1301.7,626.3" fill="#22272a"/>
<polygon points="1302,496.3 1316.6,502.4 1316.6,506.1 1302.1,499.9" fill="#c59e97"/>
<polygon points="1303,502.3 1306,503.6 1306.4,524.4 1303.4,523" fill="#b3918c"/>
<polygon points="1307.8,504.4 1310.8,505.7 1311.2,526.5 1308.2,525.2" fill="#8b90a5"/>
<polygon points="1312.6,506.4 1315.7,507.8 1316.1,528.7 1313,527.3" fill="#8b90a5"/>
<polygon points="1299.2,523.5 1319.7,532.8 1319.8,535.2 1299.3,525.8" fill="#15181a"/>
<polygon points="1303.1,544.5 1317.3,551.3 1317.4,554.8 1303.1,548" fill="#989db1"/>
<polygon points="1304,550.3 1307,551.8 1307.4,571.2 1304.5,569.7" fill="#8b90a5"/>
<polygon points="1308.7,552.6 1311.7,554.1 1312.1,573.6 1309.1,572.1" fill="#8b90a5"/>
<polygon points="1313.5,554.9 1316.5,556.4 1316.8,576 1313.8,574.5" fill="#b3918c"/>
<polygon points="1300.3,569.9 1320.4,580.1 1320.4,582.4 1300.4,572.1" fill="#15181a"/>
<polygon points="1304.1,590.7 1318,598.2 1318.1,601.6 1304.2,594.1" fill="#c59e97"/>
<polygon points="1305,596.4 1307.9,598 1308.4,621.5 1305.6,619.8" fill="#8b90a5"/>
<polygon points="1309.6,598.9 1312.6,600.5 1313,624.1 1310.1,622.4" fill="#b3918c"/>
<polygon points="1314.3,601.4 1317.2,603 1317.6,626.7 1314.7,625" fill="#8b90a5"/>
<polygon points="1301.5,619.7 1321.1,630.8 1321.1,633 1301.6,621.8" fill="#15181a"/>
<polyline points="1293.7,468.1 1297.7,624.1" fill="none" stroke="#5e2f1f" stroke-width="0.6"/>
<polygon points="1341.3,484 1346,485.8 1346.2,652 1341.9,649.5" fill="#bf6448"/>
<polygon points="1346,488.9 1369.4,498 1367.8,664.5 1346.2,652" fill="#22272a"/>
<polygon points="1349.9,516.4 1366.1,523.2 1366.1,527.1 1349.9,520.2" fill="#989db1"/>
<polygon points="1350.9,522.7 1354.2,524.2 1354.2,545.9 1350.8,544.4" fill="#b3918c"/>
<polygon points="1356.2,525 1359.6,526.5 1359.5,548.3 1356.1,546.8" fill="#8b90a5"/>
<polygon points="1361.6,527.3 1365,528.8 1364.9,550.7 1361.5,549.2" fill="#8b90a5"/>
<polygon points="1346.1,544.8 1368.9,555.1 1368.9,557.6 1346.1,547.2" fill="#15181a"/>
<polygon points="1349.9,566.8 1365.7,574.4 1365.7,578.1 1349.9,570.5" fill="#c59e97"/>
<polygon points="1350.8,573 1354.1,574.5 1354,594.9 1350.8,593.2" fill="#8b90a5"/>
<polygon points="1356,575.5 1359.3,577.1 1359.2,597.5 1356,595.8" fill="#8b90a5"/>
<polygon points="1361.3,578 1364.7,579.7 1364.5,600.2 1361.2,598.5" fill="#b3918c"/>
<polygon points="1346.2,593.2 1368.4,604.6 1368.4,607 1346.2,595.6" fill="#15181a"/>
<polygon points="1349.9,615.1 1365.3,623.3 1365.3,626.9 1349.9,618.6" fill="#989db1"/>
<polygon points="1350.8,621 1354,622.7 1353.9,647.2 1350.8,645.4" fill="#8b90a5"/>
<polygon points="1355.9,623.8 1359.1,625.5 1359,650.1 1355.8,648.3" fill="#b3918c"/>
<polygon points="1361,626.5 1364.3,628.3 1364.1,653 1360.9,651.2" fill="#8b90a5"/>
<polygon points="1346.2,645.1 1367.9,657.4 1367.9,659.7 1346.2,647.4" fill="#15181a"/>
<polyline points="1341.3,486.6 1341.9,649.5" fill="none" stroke="#5e2f1f" stroke-width="0.6"/>
<polygon points="1374,496.7 1379.1,498.6 1376.7,669.6 1372,666.9" fill="#bf6448"/>
<polygon points="1379,501.8 1391.1,506.5 1387.7,675.9 1376.7,669.6" fill="#22272a"/>
<polygon points="1380.7,529.3 1389,532.8 1388.9,536.7 1380.6,533.2" fill="#c59e97"/>
<polygon points="1381.6,535.9 1387.8,538.5 1387.4,560.9 1381.3,558.1" fill="#b3918c"/>
<polygon points="1378.2,559.3 1389.9,564.6 1389.9,567.2 1378.2,561.9" fill="#15181a"/>
<polygon points="1379.9,581.1 1388,585 1387.9,588.8 1379.8,584.9" fill="#989db1"/>
<polygon points="1380.8,587.5 1386.8,590.4 1386.4,611.3 1380.5,608.3" fill="#8b90a5"/>
<polygon points="1377.5,609.2 1388.9,615 1388.9,617.5 1377.5,611.6" fill="#15181a"/>
<polygon points="1379.1,630.7 1387,634.9 1386.9,638.5 1379.1,634.3" fill="#c59e97"/>
<polygon points="1380,636.8 1385.9,639.9 1385.4,665.1 1379.7,661.8" fill="#8b90a5"/>
<polygon points="1376.8,662.5 1387.8,668.8 1387.8,671.1 1376.7,664.8" fill="#15181a"/>
<polyline points="1374,499.4 1372,666.9" fill="none" stroke="#5e2f1f" stroke-width="0.6"/>
<polygon points="1300.7,584.7 1320.6,595.2 1321.2,637.6 1301.7,626.3" fill="#22272a"/>
<polygon points="1014.7,397.9 1415.1,582.3 1414.8,591.2 1015.6,403.5" fill="#a8a9a1" stroke="#80807a" stroke-width="0.35"/>
<polygon points="1019.8,431.3 1413.4,634.9 1413.1,643.9 1020.6,437.1" fill="#a8a9a1" stroke="#80807a" stroke-width="0.35"/>
<polyline points="1011.5,376.5 1416.2,547.9" fill="none" stroke="#3a2418" stroke-width="0.3"/>
<polygon points="1008.3,355.3 1417.3,513.4 1415.6,505.8 1012.5,353.4" fill="#743a2c"/>
<polyline points="1008.3,355.3 1417.3,513.4" fill="none" stroke="#3a2418" stroke-width="0.4"/>
<polygon points="1025.1,466.9 1411.6,689.7 1410.5,723.6 1028.5,489.3" fill="#1f2325"/>
<polygon points="1037,482.8 1038.9,483.9 1039.4,487.2 1037.5,486" fill="#121416"/>
<polygon points="1076.1,505.9 1078.2,507.2 1078.7,510.6 1076.5,509.4" fill="#121416"/>
<polygon points="1122.5,533.4 1125,534.9 1125.4,538.6 1122.9,537.1" fill="#121416"/>
<polygon points="1169.4,561.2 1172.2,562.9 1172.6,566.8 1169.7,565.1" fill="#121416"/>
<polygon points="1219.4,590.9 1222.7,592.8 1222.9,596.9 1219.6,594.9" fill="#121416"/>
<polygon points="1272.4,622.3 1276.2,624.5 1276.3,628.8 1272.5,626.6" fill="#121416"/>
<polygon points="1328,655.2 1332.4,657.8 1332.4,662.3 1328.1,659.7" fill="#121416"/>
<polygon points="1373.6,682.3 1378.4,685.1 1378.4,689.8 1373.5,686.9" fill="#121416"/>
<polygon points="1061,460 1077,468 1077,475.5 1061,467.5" fill="#222528" stroke="#111" stroke-width="0.4"/>
<polygon points="1077,468 1083.5,464.5 1083.5,471.5 1077,475.5" fill="#303336" stroke="#111" stroke-width="0.4"/>
<polygon points="1061,460 1068,457 1083.5,464.5 1077,468" fill="#8f93a4" stroke="#17191b" stroke-width="0.7"/>
<polygon points="1052,502 1060,495 1075,489 1076,495 1085,493 1086,503 1070,512 1064,517 1058,513" fill="#9ea0a3" stroke="#5f6163" stroke-width="0.5"/>
<polyline points="1056,508 1078,497" fill="none" stroke="#c9cacc" stroke-width="0.8"/>
<polyline points="1060,512 1084,500" fill="none" stroke="#c9cacc" stroke-width="0.8"/>
<polyline points="1032,508 1041,505" fill="none" stroke="#111" stroke-width="1.4"/>
<polygon points="1423.6,718.7 1429.6,719 1428.1,761.3 1425.5,763.8 1422.1,760.8" fill="#93948d" stroke="#5a5a58" stroke-width="0.5"/>
<polygon points="1427,718.7 1429.6,719 1428.1,761.3 1425.5,763.5" fill="#c6c6cc"/>
<polygon points="1438,705.4 1444,705.7 1442.7,744 1440.1,746.5 1436.7,743.5" fill="#93948d" stroke="#5a5a58" stroke-width="0.5"/>
<polygon points="1441.5,705.4 1444,705.7 1442.7,744 1440.1,746.2" fill="#c6c6cc"/>
<polygon points="1451.8,692.6 1457.8,692.9 1456.6,727.5 1454,730 1450.6,727" fill="#93948d" stroke="#5a5a58" stroke-width="0.5"/>
<polygon points="1455.2,692.6 1457.8,692.9 1456.6,727.5 1454,729.7" fill="#c6c6cc"/>
<polygon points="1465,680.4 1470.9,680.7 1469.8,711.8 1467.3,714.3 1463.9,711.3" fill="#93948d" stroke="#5a5a58" stroke-width="0.5"/>
<polygon points="1468.4,680.4 1470.9,680.7 1469.8,711.8 1467.3,714" fill="#c6c6cc"/>
<polygon points="1477.5,668.8 1483.5,669.1 1482.5,696.8 1480,699.3 1476.6,696.3" fill="#93948d" stroke="#5a5a58" stroke-width="0.5"/>
<polygon points="1481,668.8 1483.5,669.1 1482.5,696.8 1480,699" fill="#c6c6cc"/>
<polygon points="1489.6,657.7 1495.5,658 1494.7,682.4 1492.1,684.9 1488.7,681.9" fill="#93948d" stroke="#5a5a58" stroke-width="0.5"/>
<polygon points="1493,657.7 1495.5,658 1494.7,682.4 1492.1,684.6" fill="#c6c6cc"/>
<polygon points="1501.1,647 1507.1,647.3 1506.2,671 1503.7,673.5 1500.2,670.5" fill="#93948d" stroke="#5a5a58" stroke-width="0.5"/>
<polygon points="1504.5,647 1507.1,647.3 1506.2,671 1503.7,673.2" fill="#c6c6cc"/>
<polygon points="1512.1,636.8 1518.1,637.1 1517.3,660.8 1514.7,663.3 1511.3,660.3" fill="#93948d" stroke="#5a5a58" stroke-width="0.5"/>
<polygon points="1515.6,636.8 1518.1,637.1 1517.3,660.8 1514.7,663" fill="#c6c6cc"/>
<polygon points="1522.7,627 1528.7,627.3 1527.8,651 1525.3,653.5 1521.9,650.5" fill="#93948d" stroke="#5a5a58" stroke-width="0.5"/>
<polygon points="1526.1,627 1528.7,627.3 1527.8,651 1525.3,653.2" fill="#c6c6cc"/>
<polygon points="1532.9,617.6 1538.9,617.9 1538,641.6 1535.5,644.1 1532,641.1" fill="#93948d" stroke="#5a5a58" stroke-width="0.5"/>
<polygon points="1536.3,617.6 1538.9,617.9 1538,641.6 1535.5,643.8" fill="#c6c6cc"/>
<polygon points="1542.6,608.5 1548.6,608.8 1547.8,632.5 1545.2,635 1541.8,632" fill="#93948d" stroke="#5a5a58" stroke-width="0.5"/>
<polygon points="1546.1,608.5 1548.6,608.8 1547.8,632.5 1545.2,634.7" fill="#c6c6cc"/>
<polygon points="1552,599.8 1558,600.1 1557.2,623.8 1554.6,626.3 1551.2,623.3" fill="#93948d" stroke="#5a5a58" stroke-width="0.5"/>
<polygon points="1555.5,599.8 1558,600.1 1557.2,623.8 1554.6,626" fill="#c6c6cc"/>
<polygon points="1561.1,591.4 1567.1,591.7 1566.2,615.4 1563.7,617.9 1560.2,614.9" fill="#93948d" stroke="#5a5a58" stroke-width="0.5"/>
<polygon points="1564.5,591.4 1567.1,591.7 1566.2,615.4 1563.7,617.6" fill="#c6c6cc"/>
<polygon points="1616.9,538.1 1622.4,538.4 1621,579.1 1618.7,581.6 1615.5,578.6" fill="#93948d" stroke="#5a5a58" stroke-width="0.5"/>
<polygon points="1620.1,538.1 1622.4,538.4 1621,579.1 1618.7,581.3" fill="#c6c6cc"/>
<polygon points="1625.5,530.2 1631,530.5 1629.7,569.7 1627.3,572.2 1624.1,569.2" fill="#93948d" stroke="#5a5a58" stroke-width="0.5"/>
<polygon points="1628.7,530.2 1631,530.5 1629.7,569.7 1627.3,571.9" fill="#c6c6cc"/>
<polygon points="1633.8,522.5 1639.3,522.8 1638,560.7 1635.6,563.2 1632.4,560.2" fill="#93948d" stroke="#5a5a58" stroke-width="0.5"/>
<polygon points="1637,522.5 1639.3,522.8 1638,560.7 1635.6,562.9" fill="#c6c6cc"/>
<polygon points="1641.7,515.2 1647.2,515.5 1645.9,552 1643.6,554.5 1640.4,551.5" fill="#93948d" stroke="#5a5a58" stroke-width="0.5"/>
<polygon points="1644.9,515.2 1647.2,515.5 1645.9,552 1643.6,554.2" fill="#c6c6cc"/>
<polygon points="1649.3,508.1 1654.9,508.4 1653.6,543.6 1651.3,546.1 1648.1,543.1" fill="#93948d" stroke="#5a5a58" stroke-width="0.5"/>
<polygon points="1652.5,508.1 1654.9,508.4 1653.6,543.6 1651.3,545.8" fill="#c6c6cc"/>
<polygon points="1656.7,501.3 1662.2,501.6 1661,535.6 1658.6,538.1 1655.5,535.1" fill="#93948d" stroke="#5a5a58" stroke-width="0.5"/>
<polygon points="1659.8,501.3 1662.2,501.6 1661,535.6 1658.6,537.8" fill="#c6c6cc"/>
<polygon points="1663.7,494.8 1669.2,495.1 1668.1,527.9 1665.7,530.4 1662.6,527.4" fill="#93948d" stroke="#5a5a58" stroke-width="0.5"/>
<polygon points="1666.9,494.8 1669.2,495.1 1668.1,527.9 1665.7,530.1" fill="#c6c6cc"/>
<polygon points="1670.5,488.5 1676,488.8 1674.9,520.4 1672.6,522.9 1669.4,519.9" fill="#93948d" stroke="#5a5a58" stroke-width="0.5"/>
<polygon points="1673.7,488.5 1676,488.8 1674.9,520.4 1672.6,522.6" fill="#c6c6cc"/>
<polygon points="1677.1,482.4 1682.6,482.7 1681.5,513.2 1679.2,515.7 1676,512.7" fill="#93948d" stroke="#5a5a58" stroke-width="0.5"/>
<polygon points="1680.2,482.4 1682.6,482.7 1681.5,513.2 1679.2,515.4" fill="#c6c6cc"/>
<polygon points="1600,470 1626.5,480 1622,508.8 1602.4,502.2" fill="#8a472d" stroke="#3a2418" stroke-width="0.3"/>
<polygon points="1602.4,502.2 1622,508.8 1620,534 1600,527.5" fill="#1f2224"/>
<polygon points="1600,527.5 1620,534 1619.8,538.5 1599.8,532" fill="#c9c9c2" stroke="#8e8e82" stroke-width="0.3"/>
<polygon points="1572,520 1583.7,512 1583,556 1572,560" fill="#c4c4ba" stroke="#777" stroke-width="0.3"/>
<polygon points="1583.7,512 1600,497.8 1603.5,499 1602.4,528.5 1596,535.5 1581.5,531.8" fill="#24272a"/>
<polygon points="1583.7,512 1600,497.8 1603.5,499 1588,513.5" fill="#3a3d41"/>
<polygon points="1581.5,531.8 1596,535.5 1595,557 1581.5,552.7" fill="#c9c9bf" stroke="#777" stroke-width="0.3"/>
<polygon points="1596,535.5 1602.4,528.5 1601.3,551.5 1595,557" fill="#efefec" stroke="#777" stroke-width="0.3"/>
<polygon points="1573.8,553.8 1593.6,563.6 1601.3,557 1601.3,560.4 1593.6,566.5 1573.8,557" fill="#dcdcd6" stroke="#777" stroke-width="0.3"/>
<polygon points="1573.8,553.8 1581.5,548 1601.3,557 1593.6,563.6" fill="#c9c9c2" stroke="#777" stroke-width="0.3"/>
<polygon points="1574.4,558.5 1579.6,558.8 1578.5,592.5 1576.2,595 1573.2,592" fill="#93948d" stroke="#5a5a58" stroke-width="0.5"/>
<polygon points="1577.4,558.5 1579.6,558.8 1578.5,592.5 1576.2,594.7" fill="#c6c6cc"/>
<polygon points="1581.9,562 1587.1,562.3 1585.9,597 1583.7,599.5 1580.6,596.5" fill="#93948d" stroke="#5a5a58" stroke-width="0.5"/>
<polygon points="1584.9,562 1587.1,562.3 1585.9,597 1583.7,599.2" fill="#c6c6cc"/>
<polygon points="1588.9,565.5 1594.1,565.8 1593,598.5 1590.7,601 1587.7,598" fill="#93948d" stroke="#5a5a58" stroke-width="0.5"/>
<polygon points="1591.9,565.5 1594.1,565.8 1593,598.5 1590.7,600.7" fill="#c6c6cc"/>
<polygon points="1593.9,562 1599.1,562.3 1598,594 1595.8,596.5 1592.7,593.5" fill="#93948d" stroke="#5a5a58" stroke-width="0.5"/>
<polygon points="1596.9,562 1599.1,562.3 1598,594 1595.8,596.2" fill="#c6c6cc"/>
<polygon points="1417.2,513.4 1479.6,477.3 1483,410.6 1702,309.2 1685.4,455 1622.1,509.2 1625.2,477.8 1573.8,518.2 1571,553 1411.6,689.6" fill="#b35d40" stroke="#3a2418" stroke-width="0.4"/>
<polygon points="1698.8,337.7 1714,340.6 1697.7,443.6 1690,447" fill="#b35d40" stroke="#3a2418" stroke-width="0.4"/>
<polygon points="1697.7,443.6 1690,447 1685,474 1693,466.6" fill="#25282b"/>
<polygon points="1698.8,337.7 1703,335.5 1716,338.3 1714,340.6" fill="#743a2c" stroke="#3a2418" stroke-width="0.3"/>
<polyline points="1697.7,347 1694,395" fill="none" stroke="#3a2418" stroke-width="0.3"/>
<polygon points="1483,410.6 1702,309.2 1699,307.8 1479.5,406.5" fill="#743a2c"/>
<polyline points="1417.2,513.4 1479.6,477.3 1483,410.6 1702,309.2" fill="none" stroke="#3a2418" stroke-width="0.4"/>
<polyline points="1416,551 1481.9,508.9" fill="none" stroke="#3a2418" stroke-width="0.35"/>
<polyline points="1415.6,565.4 1513.3,500.7" fill="none" stroke="#3a2418" stroke-width="0.3"/>
<polyline points="1423.3,509.9 1416.2,718.4" fill="none" stroke="#3a2418" stroke-width="0.3"/>
<polyline points="1478.5,418.2 1473.7,514.1" fill="none" stroke="#3a2418" stroke-width="0.3"/>
<polyline points="1485.5,409.5 1480.3,509.9" fill="none" stroke="#3a2418" stroke-width="0.3"/>
<polyline points="1481.6,438.5 1700,326.6" fill="none" stroke="#3a2418" stroke-width="0.25"/>
<polygon points="1488.5,431 1504,423.2 1500.9,475.7 1485.6,484.9" fill="#2a2d31" stroke="#1a1a1a" stroke-width="0.3"/>
<polygon points="1488.6,458.6 1500.8,451.8 1499.7,472.2 1487.5,479.4" fill="#121416"/>
<polygon points="1484.9,483.3 1501.8,473.2 1501.5,478.6 1484.6,488.8" fill="#15181a"/>
<polygon points="1511.2,419.5 1526.5,411.8 1523.3,462.3 1508.1,471.4" fill="#2a2d31" stroke="#1a1a1a" stroke-width="0.3"/>
<polygon points="1511.1,446.1 1523.4,439.3 1522.1,458.9 1509.9,466.2" fill="#121416"/>
<polygon points="1507.5,469.8 1524.1,459.9 1523.8,465.1 1507.2,475.2" fill="#15181a"/>
<polygon points="1532.6,408.7 1546.2,401.9 1542.8,450.6 1529.3,458.7" fill="#2a2d31" stroke="#1a1a1a" stroke-width="0.3"/>
<polygon points="1532.2,434.4 1543.1,428.3 1541.7,447.3 1530.9,453.7" fill="#121416"/>
<polygon points="1528.7,457.1 1543.5,448.3 1543.2,453.3 1528.4,462.3" fill="#15181a"/>
<polygon points="1555.2,385.5 1567.7,379.5 1553.4,568.1 1541.2,578.5" fill="#2a2d31"/>
<polygon points="1553,386.6 1555.2,385.5 1541.2,578.5 1539.1,580.3" fill="#a04e2f"/>
<polygon points="1554.3,444.8 1560.5,441.1 1558.4,468.7 1552.2,472.7" fill="#a08c8a"/>
<polygon points="1552.3,458.5 1560.5,453.4 1560.3,455.2 1552.2,460.4" fill="#2a2d31"/>
<polygon points="1548.1,475.5 1562.2,466.2 1562,469.3 1547.9,478.7" fill="#191b1d"/>
<polygon points="1550.1,501.3 1556.3,496.9 1554.6,519.2 1548.5,523.8" fill="#a08c8a"/>
<polygon points="1548.4,512.4 1556.5,506.5 1556.3,508.3 1548.3,514.3" fill="#2a2d31"/>
<polygon points="1544.4,526.9 1558.4,516.3 1558.2,519.4 1544.2,530.1" fill="#191b1d"/>
<polygon points="1546.9,544.9 1553,540.1 1551.2,565 1545.1,570.1" fill="#a08c8a"/>
<polygon points="1545.1,557.5 1553.1,550.9 1553,552.6 1545,559.3" fill="#2a2d31"/>
<polygon points="1541,573.5 1554.9,561.8 1554.7,564.7 1540.8,576.6" fill="#191b1d"/>
<polygon points="1573.5,376.7 1584.5,371.4 1569.7,554.1 1559,563.2" fill="#2a2d31"/>
<polygon points="1571.5,377.7 1573.5,376.7 1559,563.2 1557,565" fill="#a04e2f"/>
<polygon points="1572,434.1 1577.5,430.8 1575.3,457.5 1569.9,461.1" fill="#a08c8a"/>
<polygon points="1570.1,447.3 1577.3,442.8 1577.2,444.6 1570,449.1" fill="#2a2d31"/>
<polygon points="1566.2,463.5 1578.8,455.3 1578.5,458.3 1566,466.7" fill="#191b1d"/>
<polygon points="1567.7,488.8 1573.1,484.9 1571.4,506.5 1566,510.6" fill="#a08c8a"/>
<polygon points="1566.1,499.5 1573.2,494.2 1573,496 1565.9,501.2" fill="#2a2d31"/>
<polygon points="1562.4,513.3 1574.8,503.9 1574.6,506.9 1562.1,516.4" fill="#191b1d"/>
<polygon points="1564.4,531 1569.8,526.7 1567.8,550.8 1562.5,555.4" fill="#a08c8a"/>
<polygon points="1562.6,543.1 1569.7,537.3 1569.6,539 1562.5,544.8" fill="#2a2d31"/>
<polygon points="1558.9,558.4 1571.2,548 1571,550.8 1558.6,561.4" fill="#191b1d"/>
<polygon points="1591.1,368.3 1601,363.5 1589,503.7 1579.3,511.3" fill="#2a2d31"/>
<polygon points="1589.2,369.2 1591.1,368.3 1579.3,511.3 1577.4,512.8" fill="#a04e2f"/>
<polygon points="1589.2,423.8 1594.1,420.8 1591.9,446.6 1587,449.9" fill="#a08c8a"/>
<polygon points="1587.4,436.5 1593.9,432.4 1593.7,434.1 1587.2,438.2" fill="#2a2d31"/>
<polygon points="1583.7,452.1 1595.1,444.6 1594.8,447.5 1583.4,455.1" fill="#191b1d"/>
<polygon points="1584.8,476.6 1589.7,473.1 1587.9,494 1583,497.7" fill="#a08c8a"/>
<polygon points="1583.2,486.9 1589.6,482.2 1589.5,483.9 1583,488.6" fill="#2a2d31"/>
<polygon points="1579.7,500.2 1591,491.6 1590.8,494.5 1579.5,503.1" fill="#191b1d"/>
<polygon points="1606.4,360.9 1615.3,356.7 1603,492.8 1594.3,499.6" fill="#2a2d31"/>
<polygon points="1604.7,361.7 1606.4,360.9 1594.3,499.6 1592.6,500.9" fill="#a04e2f"/>
<polygon points="1604.1,414.8 1608.5,412.1 1606.2,437.2 1601.9,440.1" fill="#a08c8a"/>
<polygon points="1602.4,427.1 1608.1,423.5 1608,425.1 1602.2,428.8" fill="#2a2d31"/>
<polygon points="1598.9,442 1609.1,435.3 1608.8,438.2 1598.6,445" fill="#191b1d"/>
<polygon points="1599.6,466 1603.9,462.9 1602.1,483.2 1597.8,486.5" fill="#a08c8a"/>
<polygon points="1598.1,476 1603.8,471.8 1603.7,473.4 1597.9,477.6" fill="#2a2d31"/>
<polygon points="1594.8,488.7 1605,481 1604.7,483.8 1594.6,491.6" fill="#191b1d"/>
<polygon points="1622.8,353.1 1630.7,349.3 1618.3,480.9 1610.5,487" fill="#2a2d31"/>
<polygon points="1621.1,353.8 1622.8,353.1 1610.5,487 1608.8,488.2" fill="#a04e2f"/>
<polygon points="1620.1,405.1 1624,402.8 1621.8,427 1617.8,429.6" fill="#a08c8a"/>
<polygon points="1618.4,417 1623.6,413.7 1623.4,415.4 1618.2,418.6" fill="#2a2d31"/>
<polygon points="1615.1,431.4 1624.3,425.3 1624.1,428.1 1614.9,434.2" fill="#191b1d"/>
<polygon points="1615.5,454.7 1619.4,451.9 1617.6,471.5 1613.7,474.5" fill="#a08c8a"/>
<polygon points="1614,464.3 1619.2,460.5 1619,462 1613.9,465.9" fill="#2a2d31"/>
<polygon points="1611,476.5 1620.2,469.5 1619.9,472.2 1610.7,479.3" fill="#191b1d"/>
<polygon points="1634.8,347.3 1642.8,343.4 1630.3,471.5 1622.3,477.7" fill="#2a2d31"/>
<polygon points="1633.2,348 1634.8,347.3 1622.3,477.7 1620.8,478.9" fill="#a04e2f"/>
<polygon points="1632.1,397.9 1636.1,395.5 1633.8,419.1 1629.8,421.7" fill="#a08c8a"/>
<polygon points="1630.4,409.5 1635.6,406.2 1635.5,407.7 1630.2,411.1" fill="#2a2d31"/>
<polygon points="1627.1,423.5 1636.4,417.4 1636.1,420.1 1626.8,426.3" fill="#191b1d"/>
<polygon points="1627.5,446.1 1631.4,443.3 1629.6,462.4 1625.6,465.4" fill="#a08c8a"/>
<polygon points="1626,455.5 1631.2,451.7 1631.1,453.2 1625.8,457" fill="#2a2d31"/>
<polygon points="1622.9,467.5 1632.1,460.5 1631.9,463.1 1622.7,470.2" fill="#191b1d"/>
<polygon points="1648.2,340.8 1654.8,337.7 1638.9,494.8 1632.4,500.4" fill="#2a2d31"/>
<polygon points="1646.8,341.5 1648.2,340.8 1632.4,500.4 1630.9,501.6" fill="#a04e2f"/>
<polygon points="1645.1,390.1 1648.4,388.1 1646.1,411 1642.8,413.2" fill="#a08c8a"/>
<polygon points="1643.5,401.2 1647.8,398.5 1647.7,400 1643.3,402.8" fill="#2a2d31"/>
<polygon points="1640.5,414.7 1648.3,409.6 1648,412.2 1640.2,417.4" fill="#191b1d"/>
<polygon points="1640.4,436.9 1643.7,434.5 1641.8,453.1 1638.5,455.6" fill="#a08c8a"/>
<polygon points="1639,445.9 1643.4,442.7 1643.2,444.2 1638.9,447.4" fill="#2a2d31"/>
<polygon points="1636.3,457.3 1644,451.5 1643.8,454 1636,460" fill="#191b1d"/>
<polygon points="1636.8,473.2 1640.1,470.6 1638,491.5 1634.7,494.3" fill="#a08c8a"/>
<polygon points="1635.3,483.5 1639.6,479.9 1639.5,481.4 1635.1,484.9" fill="#2a2d31"/>
<polygon points="1632.4,496.2 1640.2,489.6 1639.9,492.1 1632.2,498.7" fill="#191b1d"/>
<polygon points="1659.2,335.5 1665.8,332.4 1649.9,485.4 1643.3,491" fill="#2a2d31"/>
<polygon points="1657.9,336.2 1659.2,335.5 1643.3,491 1642,492.2" fill="#a04e2f"/>
<polygon points="1656.1,383.5 1659.4,381.5 1657.1,403.8 1653.8,406" fill="#a08c8a"/>
<polygon points="1654.5,394.3 1658.8,391.6 1658.7,393.1 1654.3,395.8" fill="#2a2d31"/>
<polygon points="1651.5,407.4 1659.2,402.4 1659,404.9 1651.2,410.1" fill="#191b1d"/>
<polygon points="1651.4,429.1 1654.7,426.7 1652.8,444.8 1649.5,447.3" fill="#a08c8a"/>
<polygon points="1650,437.9 1654.3,434.7 1654.2,436.1 1649.8,439.3" fill="#2a2d31"/>
<polygon points="1647.3,449 1655,443.2 1654.7,445.7 1647,451.6" fill="#191b1d"/>
<polygon points="1647.7,464.5 1651,461.8 1648.9,482.2 1645.6,485" fill="#a08c8a"/>
<polygon points="1646.2,474.5 1650.6,470.9 1650.4,472.3 1646.1,475.9" fill="#2a2d31"/>
<polygon points="1643.4,486.9 1651.1,480.4 1650.8,482.8 1643.1,489.4" fill="#191b1d"/>
<polygon points="1669.1,337.1 1675,334.2 1659.7,477 1653.9,482" fill="#2a2d31"/>
<polygon points="1667.9,337.7 1669.1,337.1 1653.9,482 1652.6,483.1" fill="#a04e2f"/>
<polygon points="1668.4,358.7 1671.3,357.1 1668.8,380.9 1665.9,382.7" fill="#a08c8a"/>
<polygon points="1666.7,370.3 1670.6,368.1 1670.4,369.5 1666.6,371.8" fill="#2a2d31"/>
<polygon points="1663.9,384 1670.7,379.7 1670.5,382.2 1663.6,386.5" fill="#191b1d"/>
<polygon points="1661.8,420.8 1664.7,418.7 1662.9,436.4 1660,438.6" fill="#a08c8a"/>
<polygon points="1660.5,429.3 1664.3,426.5 1664.2,427.9 1660.4,430.8" fill="#2a2d31"/>
<polygon points="1658,440.1 1664.8,434.9 1664.6,437.4 1657.7,442.6" fill="#191b1d"/>
<polygon points="1658.1,456.2 1661,453.9 1658.9,473.8 1656,476.2" fill="#a08c8a"/>
<polygon points="1656.6,465.9 1660.5,462.8 1660.3,464.2 1656.5,467.3" fill="#2a2d31"/>
<polygon points="1654,477.9 1660.8,472.1 1660.6,474.5 1653.7,480.4" fill="#191b1d"/>
<polygon points="1679.2,332.1 1683.8,329.8 1668.5,469.4 1663.9,473.4" fill="#2a2d31"/>
<polygon points="1677.9,332.7 1679.2,332.1 1663.9,473.4 1662.7,474.4" fill="#a04e2f"/>
<polygon points="1678.1,353.3 1680.4,352.1 1677.9,375.3 1675.5,376.8" fill="#a08c8a"/>
<polygon points="1676.5,364.6 1679.6,362.8 1679.4,364.2 1676.4,366" fill="#2a2d31"/>
<polygon points="1673.9,377.8 1679.5,374.3 1679.3,376.8 1673.6,380.3" fill="#191b1d"/>
<polygon points="1671.5,413.9 1673.8,412.2 1671.9,429.5 1669.6,431.3" fill="#a08c8a"/>
<polygon points="1670.3,422.2 1673.3,420 1673.2,421.3 1670.1,423.6" fill="#2a2d31"/>
<polygon points="1668,432.5 1673.6,428.3 1673.4,430.7 1667.7,435" fill="#191b1d"/>
<polygon points="1667.8,448.5 1670.1,446.6 1667.9,466.1 1665.6,468.1" fill="#a08c8a"/>
<polygon points="1666.4,457.9 1669.4,455.4 1669.3,456.8 1666.3,459.3" fill="#2a2d31"/>
<polygon points="1664,469.4 1669.6,464.7 1669.4,467 1663.7,471.8" fill="#191b1d"/>
<polygon points="1688.2,327.6 1693.6,324.9 1678.3,461 1672.9,465.7" fill="#2a2d31"/>
<polygon points="1687,328.2 1688.2,327.6 1672.9,465.7 1671.7,466.7" fill="#a04e2f"/>
<polygon points="1687.3,348.2 1690,346.7 1687.5,369.4 1684.8,371" fill="#a08c8a"/>
<polygon points="1685.7,359.2 1689.3,357.1 1689.1,358.5 1685.6,360.6" fill="#2a2d31"/>
<polygon points="1682.9,372.2 1689.3,368.3 1689.1,370.7 1682.7,374.6" fill="#191b1d"/>
<polygon points="1680.8,407.3 1683.5,405.4 1681.6,422.2 1678.9,424.3" fill="#a08c8a"/>
<polygon points="1679.5,415.5 1683,412.8 1682.9,414.2 1679.3,416.8" fill="#2a2d31"/>
<polygon points="1677,425.7 1683.4,420.9 1683.2,423.2 1676.8,428.1" fill="#191b1d"/>
<polygon points="1677,441.1 1679.7,438.9 1677.6,457.9 1674.9,460.2" fill="#a08c8a"/>
<polygon points="1675.6,450.4 1679.2,447.4 1679,448.8 1675.4,451.7" fill="#2a2d31"/>
<polygon points="1673,461.8 1679.4,456.4 1679.2,458.7 1672.8,464.1" fill="#191b1d"/>
<polygon points="1532.4,460.4 1538.2,456.9 1536,488.2 1530.3,492" fill="#2a2d31"/>
<polygon points="1530.4,461.6 1532.4,460.4 1530.3,492 1528.3,493.4" fill="#a04e2f"/>
<polygon points="1533.7,466.3 1536.5,464.6 1535,485.9 1532.2,487.7" fill="#a08c8a"/>
<polygon points="1532.3,478 1536.4,475.4 1536.2,477.3 1532.2,479.9" fill="#2a2d31"/>
<polygon points="1529.3,491.7 1537.4,486.4 1537.2,490.1 1529.1,495.6" fill="#191b1d"/>
<polygon points="1506,473 1518.7,465.4 1515.9,510.3 1503.3,518.9" fill="#2a2d31"/>
<polygon points="1503.8,474.4 1506,473 1503.3,518.9 1501.1,520.4" fill="#a04e2f"/>
<polygon points="1483.6,488.7 1491.4,484 1488.8,530.9 1481.1,536.2" fill="#2a2d31"/>
<polygon points="1481.2,490.2 1483.6,488.7 1481.1,536.2 1478.7,537.9" fill="#a04e2f"/>
<polygon points="1485.4,497.8 1489.1,495.5 1487.4,527.4 1483.7,529.9" fill="#a08c8a"/>
<polygon points="1483.8,514.2 1489.2,510.7 1489.1,512.8 1483.7,516.3" fill="#2a2d31"/>
<polygon points="1480,536 1490.4,528.8 1490.2,532.9 1479.7,540.1" fill="#191b1d"/>
<polygon points="1502,524.8 1514.1,516.4 1512.1,548.4 1500.1,557.4" fill="#2a2d31"/>
<polygon points="1499.8,526.3 1502,524.8 1500.1,557.4 1497.9,559.1" fill="#a04e2f"/>
<polygon points="1503.5,532 1507.1,529.4 1505.9,549.4 1502.3,552.1" fill="#a08c8a"/>
<polygon points="1508.3,528.5 1511.9,526 1510.6,545.9 1507.1,548.5" fill="#a08c8a"/>
<polygon points="1499,557.3 1513.5,546.4 1513.3,550.2 1498.8,561.2" fill="#191b1d"/>
<polygon points="1521.7,512 1533.5,503.8 1530.9,540.9 1519.2,549.9" fill="#2a2d31"/>
<polygon points="1519.6,513.4 1521.7,512 1519.2,549.9 1517.2,551.5" fill="#a04e2f"/>
<polygon points="1523,520.6 1526.5,518 1525,541.3 1521.4,543.9" fill="#a08c8a"/>
<polygon points="1527.7,517.2 1531.2,514.7 1529.6,537.7 1526.1,540.4" fill="#a08c8a"/>
<polygon points="1518.3,549.7 1532.3,539 1532,542.7 1518,553.5" fill="#191b1d"/>
<polygon points="1481.7,544 1486.6,540.5 1484.8,573.6 1479.9,577.3" fill="#2a2d31"/>
<polygon points="1479.3,545.7 1481.7,544 1479.9,577.3 1477.6,579.2" fill="#a04e2f"/>
<polygon points="1482.8,550.3 1485.2,548.6 1483.9,571.2 1481.6,572.9" fill="#a08c8a"/>
<polygon points="1481.7,562.6 1485.1,560 1485,562 1481.6,564.6" fill="#2a2d31"/>
<polygon points="1478.8,577.2 1486.4,571.5 1486.2,575.4 1478.6,581.3" fill="#191b1d"/>
<polygon points="1498,575 1503.1,571.1 1500.7,609.7 1495.7,613.9" fill="#2a2d31"/>
<polygon points="1495.8,576.7 1498,575 1495.7,613.9 1493.5,615.8" fill="#a04e2f"/>
<polygon points="1499,582.4 1501.4,580.5 1499.9,606.8 1497.5,608.8" fill="#a08c8a"/>
<polygon points="1497.7,596.1 1501.2,593.3 1501.1,595.1 1497.6,598" fill="#2a2d31"/>
<polygon points="1494.7,613.9 1502.2,607.5 1502,611.3 1494.5,617.7" fill="#191b1d"/>
<polygon points="1519,560 1524.1,556 1521.4,595.9 1516.4,600.2" fill="#2a2d31"/>
<polygon points="1517,561.6 1519,560 1516.4,600.2 1514.4,602" fill="#a04e2f"/>
<polygon points="1519.9,567.7 1522.4,565.8 1520.6,592.9 1518.2,595" fill="#a08c8a"/>
<polygon points="1518.6,581.7 1522.1,578.8 1522,580.6 1518.4,583.5" fill="#2a2d31"/>
<polygon points="1515.4,600.2 1522.8,593.9 1522.5,597.5 1515.2,603.8" fill="#191b1d"/>
<polygon points="1536,548 1541.1,544 1538.2,584.1 1533.2,588.4" fill="#2a2d31"/>
<polygon points="1534.1,549.5 1536,548 1533.2,588.4 1531.3,590.1" fill="#a04e2f"/>
<polygon points="1536.9,555.8 1539.3,553.8 1537.4,581.1 1535,583.1" fill="#a08c8a"/>
<polygon points="1535.4,569.7 1539,566.8 1538.8,568.6 1535.3,571.5" fill="#2a2d31"/>
<polygon points="1532.3,588.4 1539.5,582.2 1539.2,585.7 1532,591.9" fill="#191b1d"/>
<polygon points="1415.1,579.4 1692.9,389.4 1692.1,395.9 1414.8,590.5" fill="#e3e3e6" stroke="#8a8a8a" stroke-width="0.3"/>
<polygon points="1413.4,633.4 1689.2,421.3 1688.4,428 1413,644.7" fill="#e3e3e6" stroke="#8a8a8a" stroke-width="0.3"/>
<polygon points="1694,389.5 1706.5,381 1706,386.6 1693.6,395.2" fill="#e3e3e6"/>
<polygon points="1690.5,421 1702,412.3 1701.4,417.3 1690,426.3" fill="#e3e3e6"/>
<polygon points="1411.6,689.6 1571,553 1568.8,579.6 1410.5,723.6" fill="#25282b"/>
<polygon points="1622.1,509.2 1685.4,455 1683,475.7 1619.8,533.2" fill="#25282b"/>
<polygon points="1410.5,723.6 1568.8,579.6 1568.1,587.7 1410.2,733.9" fill="#d0d0d6" stroke="#77776f" stroke-width="0.3"/>
<polygon points="1619.8,533.2 1683,475.7 1682.3,482 1619.1,540.5" fill="#d0d0d6" stroke="#77776f" stroke-width="0.3"/>
<polygon points="1447.6,673.1 1452.8,668.6 1452.5,674.8 1447.4,679.4" fill="#141618"/>
<polygon points="1495.1,631.3 1499.4,627.5 1499.1,633.3 1494.8,637.1" fill="#141618"/>
<polygon points="1631.5,511.1 1633.5,509.3 1633.2,512.9 1631.1,514.7" fill="#141618"/>
<polygon points="1676.4,471.5 1678,470.1 1677.6,473.3 1676,474.8" fill="#141618"/>
<polyline points="1573.8,518.2 1568.8,579.6" fill="none" stroke="#3a2418" stroke-width="0.4"/>
<polygon points="1475.7,618 1482.2,615 1482.2,634 1475.7,637" fill="#1b1d1f"/>
<polygon points="1450.4,608 1495.4,574 1511.9,581.7 1466.9,615.7" fill="#1d2022" stroke="#111" stroke-width="0.4"/>
<polygon points="1455.7,607.2 1495.3,577.3 1506.6,582.5 1467,612.4" fill="#8e91a3"/>
<polygon points="1450.4,608 1466.9,615.7 1466.9,622.7 1450.4,615" fill="#1f2224" stroke="#111" stroke-width="0.4"/>
<polygon points="1466.9,615.7 1511.9,581.7 1511.9,588.7 1466.9,622.7" fill="#2b2e31" stroke="#111" stroke-width="0.4"/>
<polygon points="1662,455 1666,452.5 1666,466 1662,468" fill="#1b1d1f"/>
<polygon points="1642,455.5 1663,439.5 1672.5,443.5 1651.5,459.5" fill="#1d2022" stroke="#111" stroke-width="0.4"/>
<polygon points="1644.8,455.2 1663.3,441.1 1669.7,443.8 1651.2,457.9" fill="#8e91a3"/>
<polygon points="1642,455.5 1651.5,459.5 1651.5,465.5 1642,461.5" fill="#1f2224" stroke="#111" stroke-width="0.4"/>
<polygon points="1651.5,459.5 1672.5,443.5 1672.5,449.5 1651.5,465.5" fill="#2b2e31" stroke="#111" stroke-width="0.4"/>
<polygon points="1482.2,632 1490.8,620.5 1509.8,627.5 1507.8,640.5 1478.8,673.5 1474.6,677 1494.3,634.3" fill="#85888b" stroke="#55585b" stroke-width="0.4"/>
<polygon points="1454.8,670.5 1482.2,632 1494.3,634.3 1474.6,677" fill="#a5a7ac" stroke="#55585b" stroke-width="0.5"/>
<polyline points="1457.5,666.6 1476.6,672.7" fill="none" stroke="#74777b" stroke-width="0.5"/>
<polyline points="1460.3,662.8 1478.5,668.5" fill="none" stroke="#74777b" stroke-width="0.5"/>
<polyline points="1463,659 1480.5,664.2" fill="none" stroke="#74777b" stroke-width="0.5"/>
<polyline points="1465.8,655.1 1482.5,659.9" fill="none" stroke="#74777b" stroke-width="0.5"/>
<polyline points="1468.5,651.2 1484.4,655.6" fill="none" stroke="#74777b" stroke-width="0.5"/>
<polyline points="1471.2,647.4 1486.4,651.4" fill="none" stroke="#74777b" stroke-width="0.5"/>
<polyline points="1474,643.5 1488.4,647.1" fill="none" stroke="#74777b" stroke-width="0.5"/>
<polyline points="1476.7,639.7 1490.4,642.8" fill="none" stroke="#74777b" stroke-width="0.5"/>
<polyline points="1479.5,635.9 1492.3,638.6" fill="none" stroke="#74777b" stroke-width="0.5"/>
<polygon points="1661.2,475.3 1667.4,467 1681.1,472 1679.7,481.4 1658.8,505.2 1655.8,507.7 1669.9,476.9" fill="#85888b" stroke="#55585b" stroke-width="0.4"/>
<polygon points="1641.5,503 1661.2,475.3 1669.9,476.9 1655.8,507.7" fill="#a5a7ac" stroke="#55585b" stroke-width="0.5"/>
<polyline points="1643.5,500.2 1657.2,504.6" fill="none" stroke="#74777b" stroke-width="0.5"/>
<polyline points="1645.4,497.5 1658.6,501.5" fill="none" stroke="#74777b" stroke-width="0.5"/>
<polyline points="1647.4,494.7 1660,498.5" fill="none" stroke="#74777b" stroke-width="0.5"/>
<polyline points="1649.4,491.9 1661.4,495.4" fill="none" stroke="#74777b" stroke-width="0.5"/>
<polyline points="1651.4,489.1 1662.8,492.3" fill="none" stroke="#74777b" stroke-width="0.5"/>
<polyline points="1653.3,486.4 1664.3,489.2" fill="none" stroke="#74777b" stroke-width="0.5"/>
<polyline points="1655.3,483.6 1665.7,486.2" fill="none" stroke="#74777b" stroke-width="0.5"/>
<polyline points="1657.3,480.8 1667.1,483.1" fill="none" stroke="#74777b" stroke-width="0.5"/>
<polyline points="1659.3,478.1 1668.5,480" fill="none" stroke="#74777b" stroke-width="0.5"/>
<polyline points="1417.3,513.4 1410.5,723.6" fill="none" stroke="#3a2418" stroke-width="0.5"/>
</svg>
<svg class="abs" style="left:940px;top:30px" width="866" height="791" viewBox="940 30 866 791" fill="none" stroke-linejoin="round" stroke-linecap="round">
<!-- focus button -->
<rect x="947" y="38" width="32" height="32" fill="#535353"/>
<path d="M954.600 51.200v-5.600h5.600M966 45.600h5.600v5.600M971.600 56.800v5.600h-5.600M960.200 62.400h-5.600v-5.600" stroke="#e6e6e6" stroke-width="1.300" stroke-linecap="butt" stroke-linejoin="miter"/>
<path d="M962.800 48.900l4.300 2.550v5.100l-4.300 2.550l-4.300-2.550v-5.100z" fill="#e2e2e2"/>
<!-- nav cube -->
<g stroke="#3c3c3c" stroke-width="1.200">
<polygon points="1691.200,87.300 1730.400,81.900 1769.600,86.300 1733.800,94.100" fill="#fff"/>
<polygon points="1691.200,87.300 1733.800,94.100 1733.800,159 1696.300,135.800" fill="#fff"/>
<polygon points="1733.800,94.100 1769.600,86.300 1764.500,132.400 1733.800,159" fill="#fff"/>
</g>
<text transform="matrix(0.480 0.200 0.030 1 1700 120)" font-family="Liberation Sans,sans-serif" font-size="14.500" fill="#909090">Справа</text>
<text transform="matrix(0.435 -0.270 -0.040 1 1742.500 133)" font-family="Liberation Sans,sans-serif" font-size="15" fill="#909090">Сзади</text>
<!-- gizmo -->
<circle cx="997.200" cy="704.800" r="46.400" fill="#646464"/>
<path d="M997 704V686" stroke="#1515f0" stroke-width="1.600"/><path d="M997 676.500l2.700 10h-5.400z" fill="#1515f0"/>
<path d="M997 705l-14 4.500" stroke="#f01515" stroke-width="1.600"/><path d="M975.500 712l9-6l2 5z" fill="#f01515"/>
<path d="M997 705l15 4.500" stroke="#15e015" stroke-width="1.600"/><path d="M1021 711.500l-10.500.5l1.800-5z" fill="#15e015"/>
<circle cx="997" cy="705" r="3.300" fill="#d8d8d8" stroke="#999" stroke-width=".5"/>
<g font-family="Liberation Sans,sans-serif" font-size="10" stroke="none"><text x="996.500" y="670.500" fill="#1515f0">Z</text><text x="968.500" y="715.500" fill="#f01515">X</text><text x="1027" y="713.500" fill="#15e015">Y</text></g>
</svg>

</div>
<!-- RIGHT TOOLBAR -->
<div id="rtb">
<svg class="abs" style="left:0;top:0" width="36" height="775" viewBox="1806 38 36 775" fill="none" stroke="#e2e2e2" stroke-width="1.300" stroke-linejoin="round" stroke-linecap="round">
<g stroke="#727272" stroke-width="1.400"><path d="M1806 130h36M1806 399h36M1806 448.500h36M1806 630h36M1806 722.500h36"/></g>
<rect x="1808" y="638" width="32" height="32" fill="#878787" stroke="none"/><rect x="1808" y="682" width="32" height="32" fill="#878787" stroke="none"/>
<!-- R1 tree cloud -->
<path d="M1820.500 67.500h-2.500a5 5 0 0 1-1.200-9.800a7 7 0 0 1 13.600-.2a5 5 0 0 1-1.200 10h-1.500M1824 55v18.500M1824 62.500l-4-3.500M1824 65.500l4-3.500" stroke-width="1.400"/>
<!-- R2 screen -->
<path d="M1835 100.500v-7h-23.800v17h5.500M1817.500 112.500h3.500" stroke-width="1.200"/><path d="M1821.500 105.800v-3.300h3.300M1832.800 102.500h3.400v3.300M1836.200 114.700v3.300h-3.400M1824.800 118h-3.300v-3.300" stroke-width="1.200"/><path d="M1828.800 106l3.600 2.100v4.200l-3.600 2.100l-3.600-2.100v-4.200z" fill="#e2e2e2" stroke="none"/>
<!-- R3 ruler -->
<rect x="1814" y="151.500" width="19.800" height="5.600" stroke-width="1.200"/><path d="M1817.300 155v2M1820.600 154v3M1823.900 155v2M1827.200 154v3M1830.500 155v2M1814 159.600h19.800" stroke-width="1.100"/><path d="M1810 165.500v4h4z" fill="#e2e2e2" stroke="none"/>
<!-- R4 section -->
<path d="M1828.100 185.200v17.800l-9.100 9.500v-19.500z" fill="#e2e2e2" stroke="none"/><path d="M1811 201.400l7-6.400h18.700l-6 6.400z" stroke-width="1.200"/>
<!-- R5 cube section -->
<g stroke-width="1.100"><path d="M1812.200 238v15.800h17.500v-15.800zM1812.200 238l6-5.800h17.500v15.600l-6 6M1829.700 238l6-5.800M1818.200 232.200v15.600h17.500M1818.200 247.800l-6 6"/><path d="M1826.500 232.500v15.500l-6 5.600v-15.500z" fill="#e2e2e2" stroke="none"/></g>
<!-- R6 floorplan -->
<g stroke-width="1.300"><path d="M1811 280l3.500-3.700h22v20h-25.500z"/><path d="M1811.500 298h25" stroke-width="1.800"/><path d="M1829 296v-3.200h7.500" stroke-width="1.300"/><path d="M1811 286h25.500M1823 276.300v20" stroke-width="1" stroke-dasharray="3 1.200 1 1.200"/></g>
<!-- R7 target -->
<circle cx="1823.900" cy="330.800" r="7.600" stroke-width="2.300"/><circle cx="1823.900" cy="330.800" r="3.800" fill="#e2e2e2" stroke="none"/><path d="M1823.900 320.200v2.500M1823.900 339v2.500M1813.200 330.800h2.500M1832 330.800h2.500" stroke-width="2"/>
<!-- R8 flag -->
<circle cx="1823.900" cy="374.800" r="12.600" stroke-width="1.200"/><path d="M1818.200 381.500v-13q3-1.300 6 0t7.200 0v7.800q-4.200 1.300-7.200 0t-6 0" stroke-width="1.200"/>
<!-- R9 grid -->
<g stroke-width="1.100"><path d="M1811.200 427.500l26.500-15M1811.200 436.500l26-15M1820 417.500l17 9.500M1812.500 422.500l16.500 10"/></g>
<g font-family="Liberation Sans,sans-serif" font-size="6" fill="#e2e2e2" stroke="none"><text x="1819.500" y="416.500">2</text><text x="1810.500" y="422">1</text></g>
<!-- dashed boxes -->
<g stroke-width="1.300" stroke-dasharray="1.700 1.700" stroke-linecap="butt" stroke-linejoin="miter"><rect x="1812.300" y="461.500" width="23.400" height="23.400"/><rect x="1812.300" y="505.300" width="23.400" height="23.400"/><rect x="1812.300" y="549.300" width="23.400" height="23.400"/><path d="M1822 616.400h-9.700v-23.400h23.400v10"/></g>
<!-- R10 cube -->
<path d="M1824 466.300l6 3v7l-6 3.400l-6-3.400v-7zM1818 469.300l6 3.200l6-3.200M1824 472.500v7.200" stroke-width="1.100"/>
<!-- R11 eye -->
<path d="M1816.500 517q3-5 7.500-5t7.500 5q-3 5-7.500 5t-7.500-5z" fill="#e2e2e2" stroke="none"/><circle cx="1824" cy="517" r="2.700" fill="#e2e2e2" stroke="#535353" stroke-width="1.200"/>
<!-- R12 eye off -->
<path d="M1816 561q3-5 7.500-5t7.500 5q-3 5-7.500 5t-7.500-5z" fill="#e2e2e2" stroke="none"/><circle cx="1823.500" cy="561" r="2.700" fill="#e2e2e2" stroke="#535353" stroke-width="1.200"/><path d="M1817 555.500l12 11.500" stroke="#535353" stroke-width="2.600"/><path d="M1818 554.500l12 11.500" stroke-width="1.300"/>
<!-- R13 X box -->
<rect x="1822.200" y="603.400" width="15.700" height="15.500" fill="#e2e2e2" stroke="none"/><path d="M1826.200 607.300l7.800 7.800M1834 607.300l-7.800 7.800" stroke="#444" stroke-width="1.300"/>
<!-- R14 cube -->
<path d="M1813.800 647.500l10-2.300l10 2.300l-1.200 12l-8.800 5.500l-8.800-5.500z" fill="#e6e6e6" stroke="none"/><path d="M1824 650.300l9.300-2.300l-1 11.300l-8.300 5.200z" fill="#7a7a7a" stroke="none"/><path d="M1815.500 647.300l8.300-1.600l8.300 1.600l-8.300 2z" fill="#8a8a8a" stroke="none"/>
<!-- R15 orbit -->
<ellipse cx="1824" cy="698" rx="11" ry="6.200" stroke-width="2"/><ellipse cx="1824" cy="698" rx="5.300" ry="10.500" stroke-width="2"/><path d="M1824 696v3.500l-3 3M1824 699.500l3 3" stroke-width="1"/>
</svg>
</div>
<svg class="abs" style="left:0;top:0;pointer-events:none" width="600" height="440" viewBox="0 0 600 440">
<defs><filter id="sh" x="-20%" y="-20%" width="150%" height="150%"><feGaussianBlur stdDeviation="1.900"/></filter></defs>
<g transform="translate(4.500 4.500)" filter="url(#sh)" opacity=".42"><path d="M202.300 12.800L104.300 52" stroke="#000" stroke-width="2.800" stroke-linecap="butt"/><path d="M90.700 57.500l10.600-12.300l6 13.600z" fill="#000"/></g>
<path d="M202.300 12.800L104.300 52" stroke="#c00000" stroke-width="2.600" stroke-linecap="butt"/><path d="M90.700 57.500l10.600-12.300l6 13.600z" fill="#c00000"/>
<g transform="translate(4 4)" filter="url(#sh)" opacity=".42"><path d="M361.800 253.600L262 319.500" stroke="#000" stroke-width="2.600" stroke-linecap="butt"/><path d="M250 327.100l8.300-13.400l7.500 11.600z" fill="#000"/></g>
<path d="M361.800 253.600L262 319.500" stroke="#c00000" stroke-width="2.400" stroke-linecap="butt"/><path d="M250 327.100l8.300-13.400l7.500 11.600z" fill="#c00000"/>
</svg>

</body></html>
